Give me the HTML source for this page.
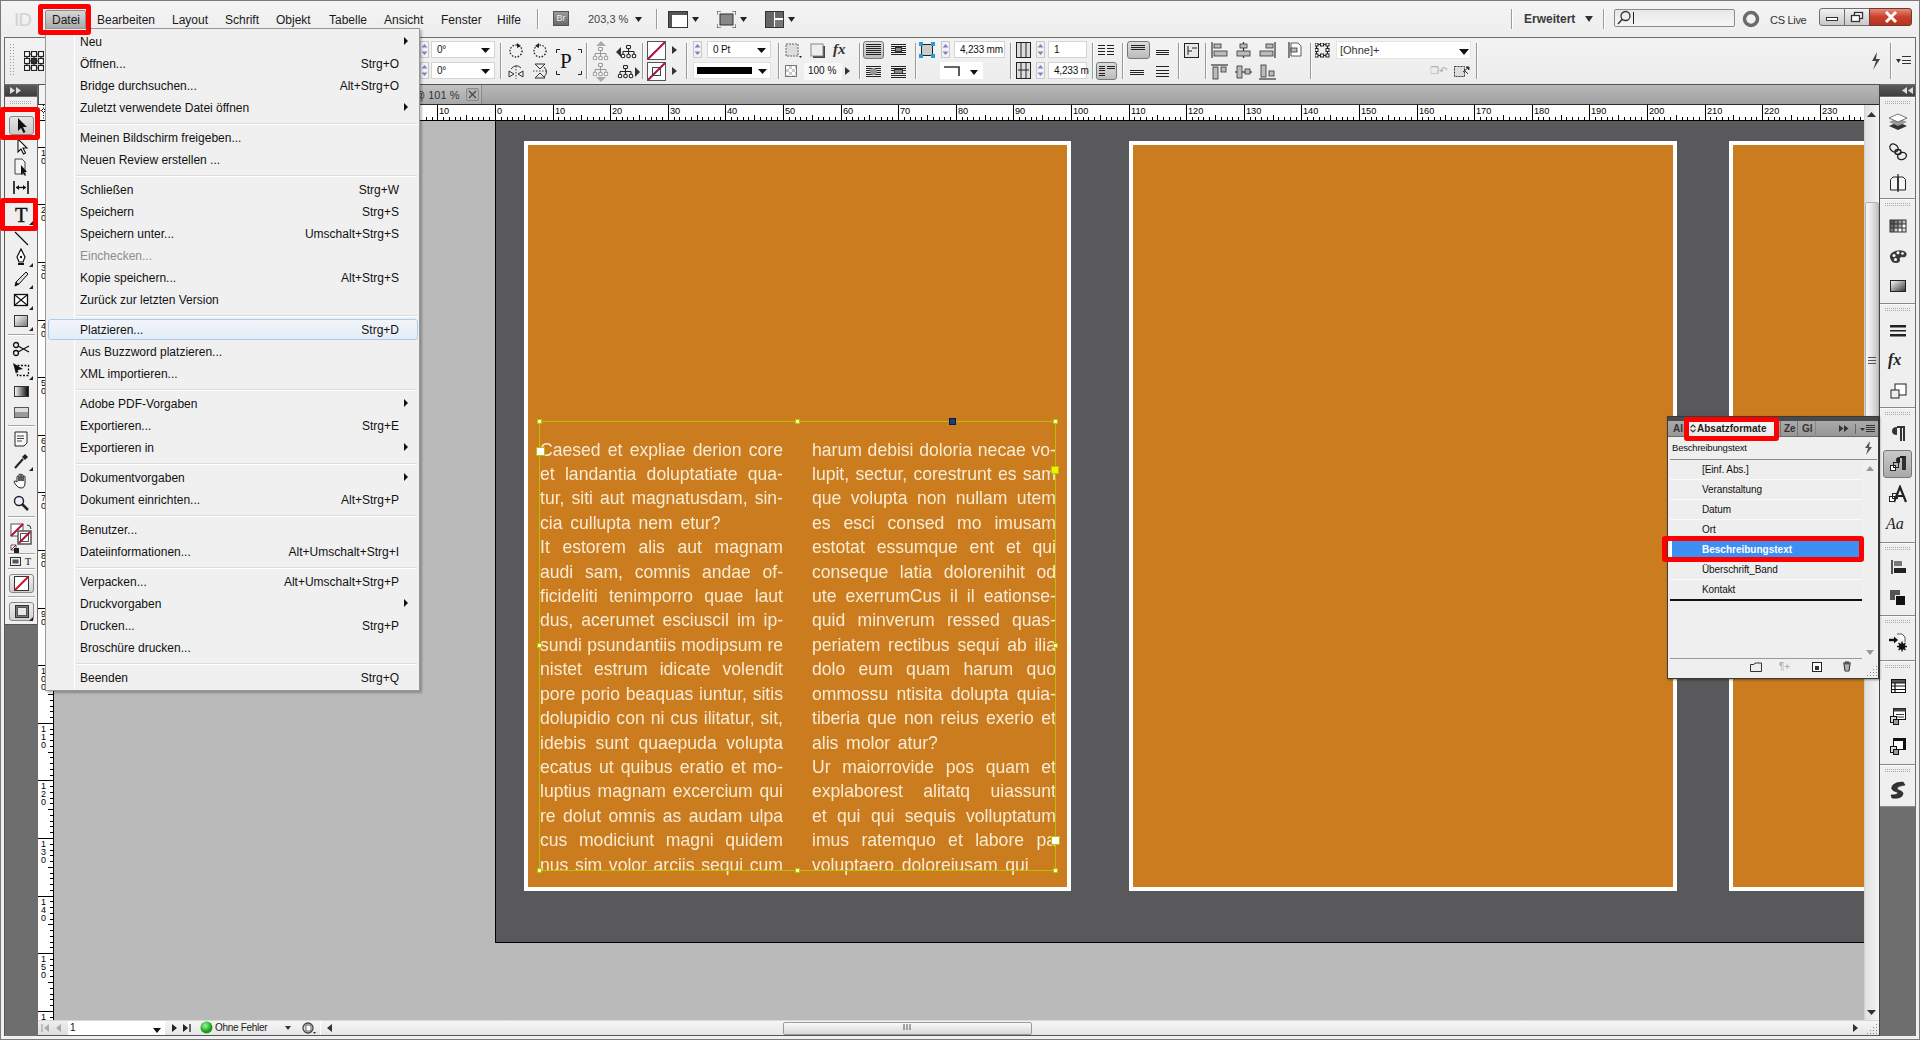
<!DOCTYPE html><html><head><meta charset="utf-8"><style>
*{margin:0;padding:0;box-sizing:border-box}
html,body{width:1920px;height:1040px;overflow:hidden;background:#f0f0f0;font-family:"Liberation Sans",sans-serif;}
body>div,div.a,.t,svg.a{position:absolute}
div div{position:absolute}
.t{white-space:nowrap;line-height:1}
</style></head><body>
<div style="left:0px;top:0px;width:1920px;height:1040px;border:1px solid #7a7a7a;background:#f0f0f0"></div>
<div style="left:1px;top:1px;width:1918px;height:36px;background:linear-gradient(#f4f4f4,#ededed)"></div>
<div style="left:45px;top:10px;width:41px;height:19px;background:linear-gradient(#d6d6d6,#a9a9a9);border:1px solid #8c8c8c;border-radius:2px"></div>
<div class="t" style="left:52px;top:14px;font-size:12px;color:#1a1a1a">Datei</div>
<div class="t" style="left:97px;top:14px;font-size:12px;color:#1a1a1a">Bearbeiten</div>
<div class="t" style="left:172px;top:14px;font-size:12px;color:#1a1a1a">Layout</div>
<div class="t" style="left:225px;top:14px;font-size:12px;color:#1a1a1a">Schrift</div>
<div class="t" style="left:276px;top:14px;font-size:12px;color:#1a1a1a">Objekt</div>
<div class="t" style="left:329px;top:14px;font-size:12px;color:#1a1a1a">Tabelle</div>
<div class="t" style="left:384px;top:14px;font-size:12px;color:#1a1a1a">Ansicht</div>
<div class="t" style="left:441px;top:14px;font-size:12px;color:#1a1a1a">Fenster</div>
<div class="t" style="left:497px;top:14px;font-size:12px;color:#1a1a1a">Hilfe</div>
<div class="t" style="left:14px;top:10px;font-size:19px;color:#d2d2d2;letter-spacing:-1px">ID</div>
<div style="left:537px;top:9px;width:2px;height:20px;background:#9c9c9c;border-right:1px solid #fff"></div>
<div style="left:656px;top:9px;width:2px;height:20px;background:#9c9c9c;border-right:1px solid #fff"></div>
<div style="left:1511px;top:9px;width:2px;height:20px;background:#9c9c9c;border-right:1px solid #fff"></div>
<div style="left:1603px;top:9px;width:2px;height:20px;background:#9c9c9c;border-right:1px solid #fff"></div>
<div style="left:553px;top:11px;width:16px;height:15px;background:linear-gradient(#9a9a9a,#6a6a6a);border:1px solid #555;font-size:9px;color:#eee;text-align:center;line-height:13px">Br</div>
<div class="t" style="left:588px;top:14px;font-size:11px;color:#444">203,3 %</div>
<svg class="a" style="left:635px;top:17px" width="7" height="5"><path d="M0 0H7L3.5 5Z" fill="#222"/></svg>
<svg class="a" style="left:668px;top:11px" width="20" height="17"><rect x="0.5" y="0.5" width="19" height="16" fill="#fff" stroke="#333"/><rect x="1" y="1" width="18" height="3" fill="#555"/><rect x="1" y="1" width="3" height="15" fill="#555"/></svg>
<svg class="a" style="left:692px;top:17px" width="7" height="5"><path d="M0 0H7L3.5 5Z" fill="#222"/></svg>
<svg class="a" style="left:717px;top:11px" width="19" height="17"><rect x="3" y="3" width="13" height="11" fill="#888" stroke="#333"/><path d="M0 4V0H4M15 0H19V4M19 13V17H15M4 17H0V13" stroke="#333" fill="none"/></svg>
<svg class="a" style="left:740px;top:17px" width="7" height="5"><path d="M0 0H7L3.5 5Z" fill="#222"/></svg>
<svg class="a" style="left:765px;top:11px" width="19" height="17"><rect x="0.5" y="0.5" width="18" height="16" fill="#fff" stroke="#333"/><rect x="1" y="1" width="8" height="15" fill="#666"/><rect x="10" y="1" width="8" height="6" fill="#666"/><rect x="10" y="9" width="8" height="7" fill="#777"/></svg>
<svg class="a" style="left:788px;top:17px" width="7" height="5"><path d="M0 0H7L3.5 5Z" fill="#222"/></svg>
<div class="t" style="left:1524px;top:13px;font-size:12px;color:#3a3a3a;font-weight:bold">Erweitert</div>
<svg class="a" style="left:1585px;top:16px" width="8" height="6"><path d="M0 0H8L4.0 6Z" fill="#333"/></svg>
<div style="left:1614px;top:9px;width:121px;height:18px;background:linear-gradient(#e8e8e8,#f6f6f6);border:1px solid #8a8a8a;border-radius:2px"></div>
<svg class="a" style="left:1617px;top:10px" width="14" height="15"><circle cx="8.5" cy="6" r="4.5" fill="none" stroke="#333" stroke-width="1.3"/><path d="M5.5 9L1 14" stroke="#333" stroke-width="1.5"/></svg>
<div style="left:1633px;top:12px;width:1px;height:12px;background:#222"></div>
<svg class="a" style="left:1742px;top:10px" width="18" height="18"><circle cx="9" cy="9" r="6.5" fill="none" stroke="#6a6a6a" stroke-width="3.5"/></svg>
<div class="t" style="left:1770px;top:15px;font-size:11px;color:#333;letter-spacing:-0.3px">CS Live</div>
<div style="left:1819px;top:8px;width:26px;height:18px;background:linear-gradient(#f2f2f2,#c9c9c9);border:1px solid #6d6d6d;border-radius:3px 0 0 3px"></div>
<div style="left:1826px;top:17px;width:12px;height:4px;border:1px solid #333;background:#fff"></div>
<div style="left:1844px;top:8px;width:26px;height:18px;background:linear-gradient(#f2f2f2,#c9c9c9);border:1px solid #6d6d6d"></div>
<svg class="a" style="left:1850px;top:11px" width="14" height="12"><rect x="4.5" y="1.5" width="8" height="6" fill="#fff" stroke="#333" stroke-width="1.3"/><rect x="1.5" y="4.5" width="8" height="6" fill="#fff" stroke="#333" stroke-width="1.3"/></svg>
<div style="left:1869px;top:8px;width:43px;height:18px;background:linear-gradient(#e88a7a,#c8402c 50%,#b8321f);border:1px solid #6d3a30;border-radius:0 3px 3px 0"></div>
<svg class="a" style="left:1883px;top:10px" width="16" height="14"><path d="M3 2L13 12M13 2L3 12" stroke="#fff" stroke-width="3"/></svg>
<div style="left:4px;top:37px;width:1912px;height:48px;border:1px solid #6e6e6e;background:#efefef"></div>
<div style="left:5px;top:38px;width:1910px;height:46px;background:linear-gradient(#f3f3f3,#ececec)"></div>
<svg class="a" style="left:9px;top:44px" width="6" height="34"><g fill="#999"><rect x="1" y="0" width="1" height="1"/><rect x="4" y="0" width="1" height="1"/><rect x="1" y="3" width="1" height="1"/><rect x="4" y="3" width="1" height="1"/><rect x="1" y="6" width="1" height="1"/><rect x="4" y="6" width="1" height="1"/><rect x="1" y="9" width="1" height="1"/><rect x="4" y="9" width="1" height="1"/><rect x="1" y="12" width="1" height="1"/><rect x="4" y="12" width="1" height="1"/><rect x="1" y="15" width="1" height="1"/><rect x="4" y="15" width="1" height="1"/><rect x="1" y="18" width="1" height="1"/><rect x="4" y="18" width="1" height="1"/><rect x="1" y="21" width="1" height="1"/><rect x="4" y="21" width="1" height="1"/><rect x="1" y="24" width="1" height="1"/><rect x="4" y="24" width="1" height="1"/><rect x="1" y="27" width="1" height="1"/><rect x="4" y="27" width="1" height="1"/><rect x="1" y="30" width="1" height="1"/><rect x="4" y="30" width="1" height="1"/></g></svg>
<svg class="a" style="left:24px;top:51px" width="20" height="20"><g fill="#fff" stroke="#222" stroke-width="1.2"><path d="M3 3H17M3 10H17M3 17H17M3 3V17M10 3V17M17 3V17" fill="none"/><rect x="0.5" y="0.5" width="5" height="5"/><rect x="0.5" y="7.5" width="5" height="5"/><rect x="0.5" y="14.5" width="5" height="5"/><rect x="7.5" y="0.5" width="5" height="5"/><rect x="7.5" y="14.5" width="5" height="5"/><rect x="14.5" y="0.5" width="5" height="5"/><rect x="14.5" y="7.5" width="5" height="5"/><rect x="14.5" y="14.5" width="5" height="5"/><rect x="7.5" y="7.5" width="5" height="5" fill="#333"/></g></svg>
<div style="left:420px;top:41px;width:9px;height:17px;border:1px solid #c8c8c8;background:#f2f2f2"></div><svg class="a" style="left:421px;top:43px" width="7" height="13"><path d="M0.5 4.5L3.5 1L6.5 4.5Z M0.5 8.5L3.5 12L6.5 8.5Z" fill="#7c83c6"/></svg>
<div style="left:420px;top:62px;width:9px;height:17px;border:1px solid #c8c8c8;background:#f2f2f2"></div><svg class="a" style="left:421px;top:64px" width="7" height="13"><path d="M0.5 4.5L3.5 1L6.5 4.5Z M0.5 8.5L3.5 12L6.5 8.5Z" fill="#7c83c6"/></svg>
<div style="left:431px;top:41px;width:64px;height:17px;background:#fff;border:1px solid #d4d4d4"></div><div class="t" style="left:437px;top:45px;font-size:10px;color:#111;letter-spacing:-0.2px">0°</div><svg class="a" style="left:481px;top:48px" width="9" height="5"><path d="M0 0H9L4.5 5Z" fill="#111"/></svg>
<div style="left:431px;top:62px;width:64px;height:17px;background:#fff;border:1px solid #d4d4d4"></div><div class="t" style="left:437px;top:66px;font-size:10px;color:#111;letter-spacing:-0.2px">0°</div><svg class="a" style="left:481px;top:69px" width="9" height="5"><path d="M0 0H9L4.5 5Z" fill="#111"/></svg>
<div style="left:500px;top:43px;width:2px;height:36px;background:#9a9a9a;border-right:1px solid #fafafa"></div>
<div style="left:586px;top:43px;width:2px;height:36px;background:#9a9a9a;border-right:1px solid #fafafa"></div>
<div style="left:642px;top:43px;width:2px;height:36px;background:#9a9a9a;border-right:1px solid #fafafa"></div>
<div style="left:686px;top:43px;width:2px;height:36px;background:#9a9a9a;border-right:1px solid #fafafa"></div>
<div style="left:778px;top:43px;width:2px;height:36px;background:#9a9a9a;border-right:1px solid #fafafa"></div>
<div style="left:859px;top:43px;width:2px;height:36px;background:#9a9a9a;border-right:1px solid #fafafa"></div>
<div style="left:915px;top:43px;width:2px;height:36px;background:#9a9a9a;border-right:1px solid #fafafa"></div>
<div style="left:1010px;top:43px;width:2px;height:36px;background:#9a9a9a;border-right:1px solid #fafafa"></div>
<div style="left:1092px;top:43px;width:2px;height:36px;background:#9a9a9a;border-right:1px solid #fafafa"></div>
<div style="left:1122px;top:43px;width:2px;height:36px;background:#9a9a9a;border-right:1px solid #fafafa"></div>
<div style="left:1178px;top:43px;width:2px;height:36px;background:#9a9a9a;border-right:1px solid #fafafa"></div>
<div style="left:1205px;top:43px;width:2px;height:36px;background:#9a9a9a;border-right:1px solid #fafafa"></div>
<div style="left:1310px;top:43px;width:2px;height:36px;background:#9a9a9a;border-right:1px solid #fafafa"></div>
<div style="left:1476px;top:43px;width:2px;height:36px;background:#9a9a9a;border-right:1px solid #fafafa"></div>
<div style="left:1890px;top:43px;width:2px;height:36px;background:#9a9a9a;border-right:1px solid #fafafa"></div>
<svg class="a" style="left:508px;top:42px" width="16" height="16"><circle cx="8" cy="9" r="6" fill="none" stroke="#222" stroke-dasharray="1.5 1.5" stroke-width="1.3"/><path d="M9 1L13 4L9 6Z" fill="#222"/></svg>
<svg class="a" style="left:532px;top:42px" width="16" height="16"><circle cx="8" cy="9" r="6" fill="none" stroke="#222" stroke-dasharray="1.5 1.5" stroke-width="1.3"/><path d="M7 1L3 4L7 6Z" fill="#222"/></svg>
<svg class="a" style="left:508px;top:63px" width="16" height="16"><path d="M8 3V16" stroke="#444" stroke-dasharray="1.5 1.5"/><path d="M1 8L6 11L1 14Z M15 8L10 11L15 14Z" fill="none" stroke="#333"/><path d="M3 6Q8 0 13 5" fill="none" stroke="#333"/></svg>
<svg class="a" style="left:532px;top:63px" width="16" height="16"><path d="M1 8H15" stroke="#444" stroke-dasharray="1.5 1.5"/><path d="M3 1L8 6L13 1Z M3 15L8 10L13 15Z" fill="none" stroke="#333"/><path d="M12 4Q17 9 12 14" fill="none" stroke="#333"/></svg>
<svg class="a" style="left:556px;top:49px" width="26" height="26"><path d="M0.5 4V0.5H4M22 0.5H25.5V4M25.5 22V25.5H22M4 25.5H0.5V22" stroke="#222" fill="none"/></svg>
<div class="t" style="left:560px;top:51px;font-family:'Liberation Serif',serif;font-size:21px;color:#111">P</div>
<svg class="a" style="left:592px;top:47px" width="18" height="14"><g fill="#fff" stroke="#999" stroke-width="1.1"><rect x="6.5" y="0.5" width="4" height="3" rx="1"/><path d="M8.5 4V6.5M3 6.5H14M3 6.5V9M8.5 6.5V9M14 6.5V9" fill="none"/><circle cx="3" cy="11" r="1.8"/><circle cx="8.5" cy="11" r="1.8"/><circle cx="14" cy="11" r="1.8"/></g></svg>
<svg class="a" style="left:620px;top:45px" width="18" height="14"><g fill="#fff" stroke="#222" stroke-width="1.1"><rect x="6.5" y="0.5" width="4" height="3" rx="1"/><path d="M8.5 4V6.5M3 6.5H14M3 6.5V9M8.5 6.5V9M14 6.5V9" fill="none"/><circle cx="3" cy="11" r="1.8"/><circle cx="8.5" cy="11" r="1.8"/><circle cx="14" cy="11" r="1.8"/></g></svg>
<svg class="a" style="left:592px;top:63px" width="18" height="14"><g fill="#fff" stroke="#999" stroke-width="1.1"><rect x="6.5" y="0.5" width="4" height="3" rx="1"/><path d="M8.5 4V6.5M3 6.5H14M3 6.5V9M8.5 6.5V9M14 6.5V9" fill="none"/><circle cx="3" cy="11" r="1.8"/><circle cx="8.5" cy="11" r="1.8"/><circle cx="14" cy="11" r="1.8"/></g></svg>
<svg class="a" style="left:617px;top:65px" width="18" height="14"><g fill="#fff" stroke="#222" stroke-width="1.1"><rect x="6.5" y="0.5" width="4" height="3" rx="1"/><path d="M8.5 4V6.5M3 6.5H14M3 6.5V9M8.5 6.5V9M14 6.5V9" fill="none"/><circle cx="3" cy="11" r="1.8"/><circle cx="8.5" cy="11" r="1.8"/><circle cx="14" cy="11" r="1.8"/></g></svg>
<svg class="a" style="left:596px;top:41px" width="10" height="5"><path d="M0 5L5 0L10 5Z" fill="#aaa"/></svg>
<svg class="a" style="left:596px;top:77px" width="10" height="5"><path d="M0 0L5 5L10 0Z" fill="#aaa"/></svg>
<svg class="a" style="left:616px;top:47px" width="5" height="10"><path d="M5 0L0 5L5 10Z" fill="#333"/></svg>
<svg class="a" style="left:635px;top:67px" width="5" height="10"><path d="M0 0L5 5L0 10Z" fill="#333"/></svg>
<div style="left:647px;top:41px;width:19px;height:19px;border:1px solid #555;background:#fff"></div>
<svg class="a" style="left:648px;top:42px" width="17" height="17"><path d="M0 17L17 0" stroke="#b0103a" stroke-width="2"/></svg>
<svg class="a" style="left:672px;top:46px" width="5" height="8"><path d="M0 0L5 4L0 8Z" fill="#333"/></svg>
<div style="left:647px;top:62px;width:19px;height:19px;border:1px solid #555;background:#fff"></div>
<svg class="a" style="left:648px;top:63px" width="17" height="17"><path d="M0 17L17 0" stroke="#b0103a" stroke-width="2"/></svg>
<svg class="a" style="left:672px;top:67px" width="5" height="8"><path d="M0 0L5 4L0 8Z" fill="#333"/></svg>
<div style="left:652px;top:67px;width:9px;height:9px;border:1px solid #444"></div>
<div style="left:693px;top:41px;width:9px;height:17px;border:1px solid #c8c8c8;background:#f2f2f2"></div><svg class="a" style="left:694px;top:43px" width="7" height="13"><path d="M0.5 4.5L3.5 1L6.5 4.5Z M0.5 8.5L3.5 12L6.5 8.5Z" fill="#7c83c6"/></svg>
<div style="left:707px;top:41px;width:64px;height:17px;background:#fff;border:1px solid #d4d4d4"></div><div class="t" style="left:713px;top:45px;font-size:10px;color:#111;letter-spacing:-0.2px">0 Pt</div><svg class="a" style="left:757px;top:48px" width="9" height="5"><path d="M0 0H9L4.5 5Z" fill="#111"/></svg>
<div style="left:693px;top:62px;width:78px;height:17px;background:#fff;border:1px solid #e0e0e0"></div>
<div style="left:697px;top:67px;width:55px;height:7px;background:#000"></div>
<svg class="a" style="left:758px;top:69px" width="9" height="5"><path d="M0 0H9L4.5 5Z" fill="#111"/></svg>
<svg class="a" style="left:785px;top:43px" width="18" height="16"><rect x="1" y="1" width="12" height="12" fill="#ddd" stroke="#666" stroke-dasharray="2 1"/><path d="M14 13L17 13L15.5 15Z" fill="#222"/></svg>
<svg class="a" style="left:810px;top:43px" width="16" height="16"><rect x="3" y="3" width="12" height="12" fill="#444"/><rect x="1" y="1" width="12" height="12" fill="#eee" stroke="#888"/></svg>
<div class="t" style="left:833px;top:42px;font-family:'Liberation Serif',serif;font-style:italic;font-weight:bold;font-size:15px;color:#333">fx</div>
<div style="left:785px;top:65px;width:12px;height:12px;border:1px solid #777;background:repeating-conic-gradient(#ccc 0 25%,#fff 0 50%) 0 0/6px 6px"></div>
<div style="left:804px;top:63px;width:38px;height:17px;background:#f8f8f8"></div>
<div class="t" style="left:808px;top:66px;font-size:10px;color:#111">100 %</div>
<svg class="a" style="left:845px;top:67px" width="5" height="8"><path d="M0 0L5 4L0 8Z" fill="#333"/></svg>
<div style="left:863px;top:41px;width:21px;height:18px;border:1px solid #777;border-radius:3px;background:linear-gradient(#ddd,#bbb)"></div>
<svg class="a" style="left:866px;top:44px" width="15" height="14"><rect x="0" y="0" width="15" height="1" fill="#222"/><rect x="0" y="2" width="15" height="1" fill="#222"/><rect x="0" y="4" width="15" height="1" fill="#222"/><rect x="0" y="6" width="15" height="1" fill="#222"/><rect x="0" y="8" width="15" height="1" fill="#222"/><rect x="0" y="10" width="15" height="1" fill="#222"/></svg>
<svg class="a" style="left:891px;top:44px" width="15" height="14"><rect x="0" y="0" width="15" height="1" fill="#222"/><rect x="0" y="2" width="15" height="1" fill="#222"/><rect x="0" y="4" width="15" height="1" fill="#222"/><rect x="0" y="6" width="15" height="1" fill="#222"/><rect x="0" y="8" width="15" height="1" fill="#222"/><rect x="0" y="10" width="15" height="1" fill="#222"/></svg>
<div style="left:895px;top:47px;width:7px;height:5px;background:#888;border:1px solid #333"></div>
<svg class="a" style="left:866px;top:66px" width="15" height="14"><rect x="0" y="0" width="15" height="1" fill="#222"/><rect x="0" y="2" width="15" height="1" fill="#222"/><rect x="0" y="4" width="15" height="1" fill="#222"/><rect x="0" y="6" width="15" height="1" fill="#222"/><rect x="0" y="8" width="15" height="1" fill="#222"/><rect x="0" y="10" width="15" height="1" fill="#222"/></svg>
<div style="left:870px;top:68px;width:7px;height:7px;background:#999;border-radius:50%"></div>
<svg class="a" style="left:891px;top:66px" width="15" height="15"><rect x="0" y="0" width="15" height="1" fill="#222"/><rect x="0" y="2" width="15" height="1" fill="#222"/><rect x="0" y="4" width="15" height="1" fill="#222"/><rect x="0" y="7" width="15" height="1" fill="#222"/><rect x="0" y="9" width="15" height="1" fill="#222"/><rect x="0" y="11" width="15" height="1" fill="#222"/></svg>
<div style="left:894px;top:69px;width:9px;height:5px;background:#888;border:1px solid #333"></div>
<svg class="a" style="left:919px;top:42px" width="16" height="16"><rect x="2.5" y="2.5" width="11" height="11" fill="#ccc" stroke="#222"/><g fill="#2a9ad8"><rect x="0" y="0" width="4" height="4"/><rect x="12" y="0" width="4" height="4"/><rect x="0" y="12" width="4" height="4"/><rect x="12" y="12" width="4" height="4"/></g></svg>
<div style="left:941px;top:41px;width:9px;height:17px;border:1px solid #c8c8c8;background:#f2f2f2"></div><svg class="a" style="left:942px;top:43px" width="7" height="13"><path d="M0.5 4.5L3.5 1L6.5 4.5Z M0.5 8.5L3.5 12L6.5 8.5Z" fill="#7c83c6"/></svg>
<div style="left:954px;top:41px;width:51px;height:17px;background:#fff;border:1px solid #d4d4d4"></div><div class="t" style="left:960px;top:45px;font-size:10px;color:#111;letter-spacing:-0.2px">4,233 mm</div>
<div style="left:940px;top:62px;width:43px;height:17px;background:#fff"></div>
<svg class="a" style="left:944px;top:66px" width="16" height="10"><path d="M0 1H15V10" stroke="#333" stroke-width="1.6" fill="none"/></svg>
<svg class="a" style="left:970px;top:70px" width="8" height="5"><path d="M0 0H8L4.0 5Z" fill="#111"/></svg>
<svg class="a" style="left:1016px;top:42px" width="15" height="16"><rect x="0.5" y="0.5" width="14" height="15" fill="#ddd" stroke="#222"/><path d="M5 0V16M10 0V16" stroke="#222"/></svg>
<svg class="a" style="left:1016px;top:62px" width="15" height="17"><rect x="0.5" y="0.5" width="14" height="16" fill="#ddd" stroke="#222"/><path d="M5 0V17M10 0V17M2 8H13" stroke="#222"/></svg>
<div style="left:1036px;top:41px;width:9px;height:17px;border:1px solid #c8c8c8;background:#f2f2f2"></div><svg class="a" style="left:1037px;top:43px" width="7" height="13"><path d="M0.5 4.5L3.5 1L6.5 4.5Z M0.5 8.5L3.5 12L6.5 8.5Z" fill="#7c83c6"/></svg>
<div style="left:1036px;top:62px;width:9px;height:17px;border:1px solid #c8c8c8;background:#f2f2f2"></div><svg class="a" style="left:1037px;top:64px" width="7" height="13"><path d="M0.5 4.5L3.5 1L6.5 4.5Z M0.5 8.5L3.5 12L6.5 8.5Z" fill="#7c83c6"/></svg>
<div style="left:1048px;top:41px;width:39px;height:17px;background:#fff;border:1px solid #d4d4d4"></div><div class="t" style="left:1054px;top:45px;font-size:10px;color:#111;letter-spacing:-0.2px">1</div>
<div style="left:1048px;top:62px;width:39px;height:17px;background:#fff;border:1px solid #d4d4d4"></div><div class="t" style="left:1054px;top:66px;font-size:10px;color:#111;letter-spacing:-0.2px">4,233 m</div>
<svg class="a" style="left:1098px;top:45px" width="7" height="14"><rect x="0" y="0" width="7" height="1" fill="#222"/><rect x="0" y="3" width="7" height="1" fill="#222"/><rect x="0" y="6" width="7" height="1" fill="#222"/><rect x="0" y="9" width="7" height="1" fill="#222"/></svg>
<svg class="a" style="left:1107px;top:45px" width="7" height="14"><rect x="0" y="0" width="7" height="1" fill="#222"/><rect x="0" y="3" width="7" height="1" fill="#222"/><rect x="0" y="6" width="7" height="1" fill="#222"/><rect x="0" y="9" width="7" height="1" fill="#222"/></svg>
<div style="left:1096px;top:62px;width:21px;height:18px;border:1px solid #777;border-radius:3px;background:linear-gradient(#ddd,#bbb)"></div>
<svg class="a" style="left:1099px;top:66px" width="6" height="13"><rect x="0" y="0" width="6" height="1" fill="#222"/><rect x="0" y="2" width="6" height="1" fill="#222"/><rect x="0" y="4" width="6" height="1" fill="#222"/><rect x="0" y="7" width="6" height="1" fill="#222"/><rect x="0" y="9" width="6" height="1" fill="#222"/></svg>
<svg class="a" style="left:1107px;top:66px" width="8" height="7"><rect x="0" y="0" width="8" height="1" fill="#222"/><rect x="0" y="2" width="8" height="1" fill="#222"/></svg>
<div style="left:1127px;top:41px;width:23px;height:18px;border:1px solid #777;border-radius:3px;background:linear-gradient(#ddd,#bbb)"></div>
<svg class="a" style="left:1131px;top:45px" width="14" height="8"><rect x="0" y="0" width="14" height="1" fill="#222"/><rect x="0" y="2" width="14" height="1" fill="#222"/><rect x="0" y="4" width="14" height="1" fill="#222"/></svg>
<svg class="a" style="left:1156px;top:50px" width="13" height="8"><rect x="0" y="0" width="13" height="1" fill="#222"/><rect x="0" y="2" width="13" height="1" fill="#222"/><rect x="0" y="4" width="13" height="1" fill="#222"/></svg>
<svg class="a" style="left:1130px;top:70px" width="14" height="8"><rect x="0" y="0" width="14" height="1" fill="#222"/><rect x="0" y="2" width="14" height="1" fill="#222"/><rect x="0" y="4" width="14" height="1" fill="#222"/></svg>
<svg class="a" style="left:1156px;top:66px" width="13" height="16"><rect x="0" y="0" width="13" height="1" fill="#222"/><rect x="0" y="4" width="13" height="1" fill="#222"/><rect x="0" y="7" width="13" height="1" fill="#222"/><rect x="0" y="10" width="13" height="1" fill="#222"/></svg>
<svg class="a" style="left:1183px;top:42px" width="17" height="17"><rect x="1.5" y="1.5" width="14" height="14" fill="#e8e8e8" stroke="#222"/><path d="M5 4V13M9 6H14M5 9H9" stroke="#222"/></svg>
<svg class="a" style="left:1211px;top:42px" width="17" height="16"><g fill="#bbb" stroke="#333" stroke-width="0.8"><path d="M1 0V16" stroke-width="1.2"/><rect x="3" y="2" width="7" height="4"/><rect x="3" y="9" width="13" height="5"/></g></svg>
<svg class="a" style="left:1235px;top:42px" width="17" height="16"><g fill="#bbb" stroke="#333" stroke-width="0.8"><path d="M8.5 0V16" stroke-width="1.2"/><rect x="5" y="2" width="7" height="4"/><rect x="2" y="9" width="13" height="5"/></g></svg>
<svg class="a" style="left:1259px;top:42px" width="17" height="16"><g fill="#bbb" stroke="#333" stroke-width="0.8"><path d="M16 0V16" stroke-width="1.2"/><rect x="7" y="2" width="7" height="4"/><rect x="1" y="9" width="13" height="5"/></g></svg>
<svg class="a" style="left:1288px;top:42px" width="17" height="16"><g fill="#bbb" stroke="#333" stroke-width="0.8"><path d="M1 0V16" stroke-width="1.2"/><path d="M3 1H10L13 4V14H3Z" fill="#fff"/><rect x="3" y="6" width="6" height="4"/></g></svg>
<svg class="a" style="left:1211px;top:64px" width="17" height="16"><g fill="#bbb" stroke="#333" stroke-width="0.8"><path d="M0 1H17" stroke-width="1.2"/><rect x="2" y="3" width="5" height="12"/><rect x="10" y="3" width="5" height="5"/></g></svg>
<svg class="a" style="left:1235px;top:64px" width="17" height="16"><g fill="#bbb" stroke="#333" stroke-width="0.8"><path d="M0 8H17" stroke-width="1.2"/><rect x="2" y="2" width="5" height="12"/><rect x="10" y="5" width="5" height="5"/></g></svg>
<svg class="a" style="left:1259px;top:64px" width="17" height="16"><g fill="#bbb" stroke="#333" stroke-width="0.8"><path d="M0 15H17" stroke-width="1.2"/><rect x="2" y="1" width="5" height="12"/><rect x="10" y="7" width="5" height="5"/></g></svg>
<svg class="a" style="left:1315px;top:43px" width="17" height="16"><rect x="1.5" y="1.5" width="11" height="11" fill="none" stroke="#222" stroke-width="1.2"/><g fill="#fff" stroke="#222"><rect x="0" y="0" width="3" height="3"/><rect x="0" y="5.5" width="3" height="3"/><rect x="0" y="11" width="3" height="3"/><rect x="5.5" y="0" width="3" height="3"/><rect x="5.5" y="11" width="3" height="3"/><rect x="11" y="0" width="3" height="3"/><rect x="11" y="5.5" width="3" height="3"/><rect x="11" y="11" width="3" height="3"/></g></svg>
<div style="left:1336px;top:41px;width:135px;height:18px;background:#fff;border:1px solid #e4e4e4"></div>
<div class="t" style="left:1340px;top:45px;font-size:11px;color:#333">[Ohne]+</div>
<svg class="a" style="left:1459px;top:49px" width="10" height="6"><path d="M0 0H10L5.0 6Z" fill="#111"/></svg>
<div class="t" style="left:1430px;top:66px;font-size:10px;color:#aaa">&#x2750;&#x21B6;</div>
<svg class="a" style="left:1454px;top:66px" width="16" height="12"><rect x="0.5" y="0.5" width="10" height="10" fill="#ddd" stroke="#333" stroke-dasharray="2 1"/><path d="M9 6L15 1M12 1H15V4M10 4L14 8" stroke="#333"/></svg>
<svg class="a" style="left:1870px;top:52px" width="12" height="18"><path d="M7 0L2 9H6L3 18L10 7H6Z" fill="#444"/></svg>
<svg class="a" style="left:1896px;top:59px" width="5" height="4"><path d="M0 0H5L2.5 4Z" fill="#333"/></svg>
<svg class="a" style="left:1902px;top:56px" width="9" height="12"><rect x="0" y="0" width="9" height="1" fill="#333"/><rect x="0" y="4" width="9" height="1" fill="#333"/><rect x="0" y="7" width="9" height="1" fill="#333"/></svg>
<div style="left:4px;top:85px;width:34px;height:951px;background:#6e6e6e;border-left:1px solid #585858"></div>
<div style="left:5px;top:85px;width:32px;height:11px;background:linear-gradient(#5c5c5c,#3e3e3e)"></div>
<svg class="a" style="left:10px;top:87px" width="12" height="7"><path d="M0 0L5 3.5L0 7Z M6 0L11 3.5L6 7Z" fill="#ddd"/></svg>
<div style="left:5px;top:97px;width:32px;height:528px;background:#efefef;border-bottom:1px solid #555"></div>
<svg class="a" style="left:10px;top:101px" width="22" height="3"><g fill="#aaa"><rect x="0" y="0" width="1" height="1"/><rect x="0" y="2" width="1" height="1"/><rect x="2" y="0" width="1" height="1"/><rect x="2" y="2" width="1" height="1"/><rect x="4" y="0" width="1" height="1"/><rect x="4" y="2" width="1" height="1"/><rect x="6" y="0" width="1" height="1"/><rect x="6" y="2" width="1" height="1"/><rect x="8" y="0" width="1" height="1"/><rect x="8" y="2" width="1" height="1"/><rect x="10" y="0" width="1" height="1"/><rect x="10" y="2" width="1" height="1"/><rect x="12" y="0" width="1" height="1"/><rect x="12" y="2" width="1" height="1"/><rect x="14" y="0" width="1" height="1"/><rect x="14" y="2" width="1" height="1"/><rect x="16" y="0" width="1" height="1"/><rect x="16" y="2" width="1" height="1"/><rect x="18" y="0" width="1" height="1"/><rect x="18" y="2" width="1" height="1"/><rect x="20" y="0" width="1" height="1"/><rect x="20" y="2" width="1" height="1"/></g></svg>
<div style="left:9px;top:116px;width:25px;height:19px;border:1px solid #888;border-radius:3px;background:linear-gradient(#e6e6e6,#c8c8c8)"></div>
<svg class="a" style="left:12px;top:116px" width="18" height="18"><path d="M6 2L6 15L9 12L11.5 17L13.5 16L11 11L15 11Z" fill="#111"/></svg>
<svg class="a" style="left:12px;top:137px" width="18" height="18"><path d="M6 2L6 15L9 12L11.5 17L13.5 16L11 11L15 11Z" fill="#fff" stroke="#111" stroke-width="1.1"/></svg>
<svg class="a" style="left:12px;top:158px" width="18" height="18"><path d="M3 1H10L13 4V16H3Z" fill="#f4f4f4" stroke="#444"/><path d="M9 7L9 17L11 15L13 18L14 17L12 14L15 14Z" fill="#111"/></svg>
<svg class="a" style="left:12px;top:178px" width="18" height="18"><path d="M2 3V16M16 3V16" stroke="#111" stroke-width="1.6"/><path d="M4 9.5H14" stroke="#111" stroke-width="1.3"/><path d="M4 9.5L7 7V12Z M14 9.5L11 7V12Z" fill="#111"/></svg>
<div class="t" style="left:15px;top:205px;font-family:'Liberation Serif',serif;font-size:20.5px;color:#111;-webkit-text-stroke:0.4px #111">T</div>
<svg class="a" style="left:12px;top:229px" width="18" height="18"><path d="M3 3L16 16" stroke="#111" stroke-width="1.3"/></svg>
<svg class="a" style="left:12px;top:248px" width="18" height="18"><path d="M9 1L13 9L11 14H7L5 9Z" fill="#fff" stroke="#111" stroke-width="1.2"/><circle cx="9" cy="9" r="1.2" fill="#111"/><path d="M6 15H12V17H6Z" fill="#111"/></svg>
<svg class="a" style="left:12px;top:270px" width="18" height="18"><path d="M14 2L16 4L7 14L3 16L4 12Z" fill="#ddd" stroke="#111"/><path d="M3 16L4 12L7 14Z" fill="#111"/></svg>
<svg class="a" style="left:12px;top:291px" width="18" height="18"><rect x="2.5" y="3.5" width="13" height="11" fill="#fff" stroke="#111" stroke-width="1.3"/><path d="M3 4L15 14M15 4L3 14" stroke="#111" stroke-width="1.1"/></svg>
<svg class="a" style="left:12px;top:312px" width="18" height="18"><rect x="2.5" y="3.5" width="13" height="11" fill="url(#g1)" stroke="#333"/><defs><linearGradient id="g1" x1="0" y1="0" x2="1" y2="1"><stop offset="0" stop-color="#fff"/><stop offset="1" stop-color="#777"/></linearGradient></defs></svg>
<div style="left:8px;top:334px;width:27px;height:2px;background:#a8a8a8;border-bottom:1px solid #fff"></div>
<svg class="a" style="left:12px;top:340px" width="18" height="18"><circle cx="4" cy="5" r="2.5" fill="none" stroke="#111" stroke-width="1.3"/><circle cx="4" cy="13" r="2.5" fill="none" stroke="#111" stroke-width="1.3"/><path d="M6 6L17 12M6 12L17 6" stroke="#111" stroke-width="1.3"/></svg>
<svg class="a" style="left:12px;top:361px" width="18" height="18"><rect x="5.5" y="4.5" width="11" height="10" fill="none" stroke="#111" stroke-width="1.3" stroke-dasharray="2 1.5"/><path d="M1 2L11 8L6 9L4 13Z" fill="#111"/></svg>
<svg class="a" style="left:12px;top:382px" width="18" height="18"><defs><linearGradient id="g2"><stop offset="0" stop-color="#fff"/><stop offset="1" stop-color="#000"/></linearGradient></defs><rect x="2.5" y="4.5" width="14" height="10" fill="url(#g2)" stroke="#333"/></svg>
<svg class="a" style="left:12px;top:403px" width="18" height="18"><rect x="2.5" y="4.5" width="14" height="10" fill="#999" stroke="#555"/><rect x="3" y="5" width="13" height="4" fill="#ddd"/></svg>
<div style="left:8px;top:425px;width:27px;height:2px;background:#a8a8a8;border-bottom:1px solid #fff"></div>
<svg class="a" style="left:12px;top:430px" width="18" height="18"><path d="M3 2H15V13L12 16H3Z" fill="#f8f8f8" stroke="#222"/><path d="M5 6H12M5 8.5H12M5 11H10" stroke="#444"/></svg>
<svg class="a" style="left:12px;top:452px" width="18" height="18"><path d="M3 16L11 7" stroke="#222" stroke-width="2"/><path d="M10 5L13 2L16 5L13 8Z" fill="#222"/></svg>
<svg class="a" style="left:12px;top:472px" width="18" height="18"><path d="M5 10V5Q5 4 6 4Q7 4 7 5V9V3Q7 2 8 2Q9 2 9 3V9V3.5Q9 2.5 10 2.5Q11 2.5 11 3.5V9V5Q11 4 12 4Q13 4 13 5V11Q13 16 9 16Q6 16 4 13L2 10Q2 9 3 9Q4 9 5 10Z" fill="#fff" stroke="#222"/></svg>
<svg class="a" style="left:12px;top:494px" width="18" height="18"><circle cx="7" cy="7" r="4.5" fill="#eef" stroke="#222" stroke-width="1.4"/><path d="M10 10L16 16" stroke="#222" stroke-width="2.5"/></svg>
<div style="left:8px;top:516px;width:27px;height:2px;background:#a8a8a8;border-bottom:1px solid #fff"></div>
<svg class="a" style="left:10px;top:523px" width="24" height="31"><rect x="1" y="1" width="12" height="12" fill="#fff" stroke="#555"/><path d="M1 13L13 1" stroke="#b0103a" stroke-width="2"/><rect x="8" y="8" width="13" height="13" fill="#fff" stroke="#555" stroke-width="1.5"/><rect x="10.5" y="10.5" width="8" height="8" fill="none" stroke="#555"/><path d="M9 20L20 9" stroke="#b0103a" stroke-width="2"/><path d="M17 2Q21 2 21 6" fill="none" stroke="#333"/><path d="M1 22H6V27H1Z" fill="#fff" stroke="#555"/><path d="M1 27L6 22" stroke="#b0103a"/><rect x="4" y="25" width="5" height="5" fill="#222"/></svg>
<div style="left:8px;top:553px;width:27px;height:2px;background:#a8a8a8;border-bottom:1px solid #fff"></div>
<svg class="a" style="left:10px;top:557px" width="24" height="9"><rect x="0.5" y="0.5" width="10" height="8" fill="#eee" stroke="#333"/><rect x="2.5" y="2.5" width="6" height="4" fill="#555"/></svg>
<div class="t" style="left:25px;top:557px;font-family:'Liberation Serif',serif;font-size:10px;color:#111">T</div>
<div style="left:8px;top:568px;width:27px;height:2px;background:#a8a8a8;border-bottom:1px solid #fff"></div>
<div style="left:9px;top:574px;width:25px;height:19px;border:1px solid #888;border-radius:3px;background:linear-gradient(#eee,#d0d0d0)"></div>
<svg class="a" style="left:14px;top:576px" width="15" height="15"><rect x="0.5" y="0.5" width="14" height="14" fill="#fff" stroke="#333"/><path d="M1 14L14 1" stroke="#d01030" stroke-width="2"/></svg>
<div style="left:8px;top:596px;width:27px;height:2px;background:#a8a8a8;border-bottom:1px solid #fff"></div>
<div style="left:9px;top:602px;width:25px;height:19px;border:1px solid #888;border-radius:3px;background:linear-gradient(#eee,#d0d0d0)"></div>
<svg class="a" style="left:15px;top:605px" width="14" height="13"><rect x="0.5" y="0.5" width="13" height="12" fill="#777" stroke="#333"/><rect x="2.5" y="2.5" width="9" height="8" fill="#e8e8e8" stroke="#555"/></svg>
<svg class="a" style="left:29px;top:221px" width="4" height="4"><path d="M4 0V4H0Z" fill="#222"/></svg>
<svg class="a" style="left:29px;top:263px" width="4" height="4"><path d="M4 0V4H0Z" fill="#222"/></svg>
<svg class="a" style="left:29px;top:285px" width="4" height="4"><path d="M4 0V4H0Z" fill="#222"/></svg>
<svg class="a" style="left:29px;top:306px" width="4" height="4"><path d="M4 0V4H0Z" fill="#222"/></svg>
<svg class="a" style="left:29px;top:327px" width="4" height="4"><path d="M4 0V4H0Z" fill="#222"/></svg>
<svg class="a" style="left:29px;top:376px" width="4" height="4"><path d="M4 0V4H0Z" fill="#222"/></svg>
<svg class="a" style="left:29px;top:467px" width="4" height="4"><path d="M4 0V4H0Z" fill="#222"/></svg>
<svg class="a" style="left:29px;top:617px" width="4" height="4"><path d="M4 0V4H0Z" fill="#222"/></svg>
<div style="left:38px;top:84px;width:1842px;height:21px;background:linear-gradient(#b8b8b8,#a0a0a0);border-top:1px solid #555;border-bottom:1px solid #2a2a2a"></div>
<div style="left:38px;top:85px;width:444px;height:19px;background:linear-gradient(#c2c2c2,#a8a8a8);border-right:1px solid #8a8a8a"></div>
<div style="left:38px;top:85px;width:8px;height:19px;background:#f4f4f4;border-left:1px solid #555"></div>
<div class="t" style="left:414px;top:90px;font-size:11px;color:#333">@ 101 %</div>
<div style="left:466px;top:88px;width:13px;height:13px;border:1px solid #8a8a8a;background:#b0b0b0;border-radius:2px"></div>
<svg class="a" style="left:468px;top:90px" width="9" height="9"><path d="M1 1L8 8M8 1L1 8" stroke="#444" stroke-width="1.2"/></svg>
<div style="left:38px;top:105px;width:1826px;height:15px;background:#fff"></div>
<svg class="a" style="left:0;top:0" width="1920" height="125"><path d="M426.5 117V120 M432.5 117V120 M437.5 105V120 M443.5 117V120 M449.5 117V120 M455.5 117V120 M460.5 117V120 M466.5 115V120 M472.5 117V120 M478.5 117V120 M483.5 117V120 M489.5 117V120 M495.5 105V120 M501.5 117V120 M507.5 117V120 M512.5 117V120 M518.5 117V120 M524.5 115V120 M530.5 117V120 M535.5 117V120 M541.5 117V120 M547.5 117V120 M553.5 105V120 M558.5 117V120 M564.5 117V120 M570.5 117V120 M576.5 117V120 M581.5 115V120 M587.5 117V120 M593.5 117V120 M599.5 117V120 M604.5 117V120 M610.5 105V120 M616.5 117V120 M622.5 117V120 M627.5 117V120 M633.5 117V120 M639.5 115V120 M645.5 117V120 M651.5 117V120 M656.5 117V120 M662.5 117V120 M668.5 105V120 M674.5 117V120 M679.5 117V120 M685.5 117V120 M691.5 117V120 M697.5 115V120 M702.5 117V120 M708.5 117V120 M714.5 117V120 M720.5 117V120 M725.5 105V120 M731.5 117V120 M737.5 117V120 M743.5 117V120 M748.5 117V120 M754.5 115V120 M760.5 117V120 M766.5 117V120 M771.5 117V120 M777.5 117V120 M783.5 105V120 M789.5 117V120 M795.5 117V120 M800.5 117V120 M806.5 117V120 M812.5 115V120 M818.5 117V120 M823.5 117V120 M829.5 117V120 M835.5 117V120 M841.5 105V120 M846.5 117V120 M852.5 117V120 M858.5 117V120 M864.5 117V120 M869.5 115V120 M875.5 117V120 M881.5 117V120 M887.5 117V120 M892.5 117V120 M898.5 105V120 M904.5 117V120 M910.5 117V120 M915.5 117V120 M921.5 117V120 M927.5 115V120 M933.5 117V120 M939.5 117V120 M944.5 117V120 M950.5 117V120 M956.5 105V120 M962.5 117V120 M967.5 117V120 M973.5 117V120 M979.5 117V120 M985.5 115V120 M990.5 117V120 M996.5 117V120 M1002.5 117V120 M1008.5 117V120 M1013.5 105V120 M1019.5 117V120 M1025.5 117V120 M1031.5 117V120 M1036.5 117V120 M1042.5 115V120 M1048.5 117V120 M1054.5 117V120 M1059.5 117V120 M1065.5 117V120 M1071.5 105V120 M1077.5 117V120 M1083.5 117V120 M1088.5 117V120 M1094.5 117V120 M1100.5 115V120 M1106.5 117V120 M1111.5 117V120 M1117.5 117V120 M1123.5 117V120 M1129.5 105V120 M1134.5 117V120 M1140.5 117V120 M1146.5 117V120 M1152.5 117V120 M1157.5 115V120 M1163.5 117V120 M1169.5 117V120 M1175.5 117V120 M1180.5 117V120 M1186.5 105V120 M1192.5 117V120 M1198.5 117V120 M1203.5 117V120 M1209.5 117V120 M1215.5 115V120 M1221.5 117V120 M1227.5 117V120 M1232.5 117V120 M1238.5 117V120 M1244.5 105V120 M1250.5 117V120 M1255.5 117V120 M1261.5 117V120 M1267.5 117V120 M1273.5 115V120 M1278.5 117V120 M1284.5 117V120 M1290.5 117V120 M1296.5 117V120 M1301.5 105V120 M1307.5 117V120 M1313.5 117V120 M1319.5 117V120 M1324.5 117V120 M1330.5 115V120 M1336.5 117V120 M1342.5 117V120 M1347.5 117V120 M1353.5 117V120 M1359.5 105V120 M1365.5 117V120 M1371.5 117V120 M1376.5 117V120 M1382.5 117V120 M1388.5 115V120 M1394.5 117V120 M1399.5 117V120 M1405.5 117V120 M1411.5 117V120 M1417.5 105V120 M1422.5 117V120 M1428.5 117V120 M1434.5 117V120 M1440.5 117V120 M1445.5 115V120 M1451.5 117V120 M1457.5 117V120 M1463.5 117V120 M1468.5 117V120 M1474.5 105V120 M1480.5 117V120 M1486.5 117V120 M1491.5 117V120 M1497.5 117V120 M1503.5 115V120 M1509.5 117V120 M1515.5 117V120 M1520.5 117V120 M1526.5 117V120 M1532.5 105V120 M1538.5 117V120 M1543.5 117V120 M1549.5 117V120 M1555.5 117V120 M1561.5 115V120 M1566.5 117V120 M1572.5 117V120 M1578.5 117V120 M1584.5 117V120 M1589.5 105V120 M1595.5 117V120 M1601.5 117V120 M1607.5 117V120 M1612.5 117V120 M1618.5 115V120 M1624.5 117V120 M1630.5 117V120 M1635.5 117V120 M1641.5 117V120 M1647.5 105V120 M1653.5 117V120 M1659.5 117V120 M1664.5 117V120 M1670.5 117V120 M1676.5 115V120 M1682.5 117V120 M1687.5 117V120 M1693.5 117V120 M1699.5 117V120 M1705.5 105V120 M1710.5 117V120 M1716.5 117V120 M1722.5 117V120 M1728.5 117V120 M1733.5 115V120 M1739.5 117V120 M1745.5 117V120 M1751.5 117V120 M1756.5 117V120 M1762.5 105V120 M1768.5 117V120 M1774.5 117V120 M1779.5 117V120 M1785.5 117V120 M1791.5 115V120 M1797.5 117V120 M1803.5 117V120 M1808.5 117V120 M1814.5 117V120 M1820.5 105V120 M1826.5 117V120 M1831.5 117V120 M1837.5 117V120 M1843.5 117V120 M1849.5 115V120 M1854.5 117V120 M1860.5 117V120" stroke="#000" stroke-width="1"/><path d="M38 120.5H1864" stroke="#000"/><g font-family="Liberation Sans" font-size="9.2" fill="#000"><text x="439.0" y="114">10</text><text x="497.0" y="114">0</text><text x="555.0" y="114">10</text><text x="612.0" y="114">20</text><text x="670.0" y="114">30</text><text x="727.0" y="114">40</text><text x="785.0" y="114">50</text><text x="843.0" y="114">60</text><text x="900.0" y="114">70</text><text x="958.0" y="114">80</text><text x="1015.0" y="114">90</text><text x="1073.0" y="114">100</text><text x="1131.0" y="114">110</text><text x="1188.0" y="114">120</text><text x="1246.0" y="114">130</text><text x="1303.0" y="114">140</text><text x="1361.0" y="114">150</text><text x="1419.0" y="114">160</text><text x="1476.0" y="114">170</text><text x="1534.0" y="114">180</text><text x="1591.0" y="114">190</text><text x="1649.0" y="114">200</text><text x="1707.0" y="114">210</text><text x="1764.0" y="114">220</text><text x="1822.0" y="114">230</text></g></svg>
<div style="left:38px;top:105px;width:16px;height:15px;background:#fff;border-right:1px solid #000"></div>
<svg class="a" style="left:38px;top:105px" width="16" height="15"><path d="M5.5 0V15M0 5.5H16" stroke="#111" stroke-dasharray="1 1.5"/><path d="M5.5 3.5L7.5 5.5L5.5 7.5L3.5 5.5Z" fill="#fff" stroke="#111"/></svg>
<div style="left:38px;top:121px;width:15px;height:899px;background:#fff"></div>
<svg class="a" style="left:0;top:0" width="60" height="1040"><path d="M50 124.5H53 M50 130.5H53 M50 135.5H53 M50 141.5H53 M38 147.5H53 M50 153.5H53 M50 158.5H53 M50 164.5H53 M50 170.5H53 M48 176.5H53 M50 181.5H53 M50 187.5H53 M50 193.5H53 M50 199.5H53 M38 204.5H53 M50 210.5H53 M50 216.5H53 M50 222.5H53 M50 227.5H53 M48 233.5H53 M50 239.5H53 M50 245.5H53 M50 250.5H53 M50 256.5H53 M38 262.5H53 M50 268.5H53 M50 274.5H53 M50 279.5H53 M50 285.5H53 M48 291.5H53 M50 297.5H53 M50 302.5H53 M50 308.5H53 M50 314.5H53 M38 320.5H53 M50 325.5H53 M50 331.5H53 M50 337.5H53 M50 343.5H53 M48 348.5H53 M50 354.5H53 M50 360.5H53 M50 366.5H53 M50 371.5H53 M38 377.5H53 M50 383.5H53 M50 389.5H53 M50 394.5H53 M50 400.5H53 M48 406.5H53 M50 412.5H53 M50 418.5H53 M50 423.5H53 M50 429.5H53 M38 435.5H53 M50 441.5H53 M50 446.5H53 M50 452.5H53 M50 458.5H53 M48 464.5H53 M50 469.5H53 M50 475.5H53 M50 481.5H53 M50 487.5H53 M38 492.5H53 M50 498.5H53 M50 504.5H53 M50 510.5H53 M50 515.5H53 M48 521.5H53 M50 527.5H53 M50 533.5H53 M50 538.5H53 M50 544.5H53 M38 550.5H53 M50 556.5H53 M50 562.5H53 M50 567.5H53 M50 573.5H53 M48 579.5H53 M50 585.5H53 M50 590.5H53 M50 596.5H53 M50 602.5H53 M38 608.5H53 M50 613.5H53 M50 619.5H53 M50 625.5H53 M50 631.5H53 M48 636.5H53 M50 642.5H53 M50 648.5H53 M50 654.5H53 M50 659.5H53 M38 665.5H53 M50 671.5H53 M50 677.5H53 M50 682.5H53 M50 688.5H53 M48 694.5H53 M50 700.5H53 M50 706.5H53 M50 711.5H53 M50 717.5H53 M38 723.5H53 M50 729.5H53 M50 734.5H53 M50 740.5H53 M50 746.5H53 M48 752.5H53 M50 757.5H53 M50 763.5H53 M50 769.5H53 M50 775.5H53 M38 780.5H53 M50 786.5H53 M50 792.5H53 M50 798.5H53 M50 803.5H53 M48 809.5H53 M50 815.5H53 M50 821.5H53 M50 826.5H53 M50 832.5H53 M38 838.5H53 M50 844.5H53 M50 850.5H53 M50 855.5H53 M50 861.5H53 M48 867.5H53 M50 873.5H53 M50 878.5H53 M50 884.5H53 M50 890.5H53 M38 896.5H53 M50 901.5H53 M50 907.5H53 M50 913.5H53 M50 919.5H53 M48 924.5H53 M50 930.5H53 M50 936.5H53 M50 942.5H53 M50 947.5H53 M38 953.5H53 M50 959.5H53 M50 965.5H53 M50 970.5H53 M50 976.5H53 M48 982.5H53 M50 988.5H53 M50 994.5H53 M50 999.5H53 M50 1005.5H53 M38 1011.5H53 M50 1017.5H53" stroke="#000"/><path d="M53.5 105V1020" stroke="#000"/><g font-family="Liberation Sans" font-size="9" fill="#000"><text x="41" y="156.0">1</text><text x="41" y="164.2">0</text><text x="41" y="213.0">2</text><text x="41" y="221.2">0</text><text x="41" y="271.0">3</text><text x="41" y="279.2">0</text><text x="41" y="329.0">4</text><text x="41" y="337.2">0</text><text x="41" y="386.0">5</text><text x="41" y="394.2">0</text><text x="41" y="444.0">6</text><text x="41" y="452.2">0</text><text x="41" y="501.0">7</text><text x="41" y="509.2">0</text><text x="41" y="559.0">8</text><text x="41" y="567.2">0</text><text x="41" y="617.0">9</text><text x="41" y="625.2">0</text><text x="41" y="674.0">1</text><text x="41" y="682.2">0</text><text x="41" y="690.4">0</text><text x="41" y="732.0">1</text><text x="41" y="740.2">1</text><text x="41" y="748.4">0</text><text x="41" y="789.0">1</text><text x="41" y="797.2">2</text><text x="41" y="805.4">0</text><text x="41" y="847.0">1</text><text x="41" y="855.2">3</text><text x="41" y="863.4">0</text><text x="41" y="905.0">1</text><text x="41" y="913.2">4</text><text x="41" y="921.4">0</text><text x="41" y="962.0">1</text><text x="41" y="970.2">5</text><text x="41" y="978.4">0</text><text x="41" y="1020.0">1</text><text x="41" y="1028.2">6</text><text x="41" y="1036.4">0</text></g></svg>
<div style="left:54px;top:121px;width:1810px;height:899px;background:#bababa"></div>
<div style="left:495px;top:121px;width:1369px;height:822px;background:#59595b;border-left:1px solid #000;border-bottom:1px solid #000"></div>
<div style="left:524px;top:141px;width:547px;height:750px;background:#ca7c1f;border:4px solid #fff"></div>
<div style="left:1129px;top:141px;width:548px;height:750px;background:#ca7c1f;border:4px solid #fff"></div>
<div style="left:1729px;top:141px;width:135px;height:750px;background:#ca7c1f;border:4px solid #fff;border-right:none"></div>
<style>.tl{position:absolute;white-space:nowrap;transform:scaleX(0.950);transform-origin:0 0;font-size:18.5px;line-height:20px;height:20px;color:rgba(255,247,232,0.9);letter-spacing:0px}.tl.j{display:flex;justify-content:space-between}</style>
<div class="tl j" style="left:540px;top:439.5px;width:255.8px"><span>Caesed</span><span>et</span><span>expliae</span><span>derion</span><span>core</span></div><div class="tl j" style="left:540px;top:463.9px;width:255.8px"><span>et</span><span>landantia</span><span>doluptatiate</span><span>qua-</span></div><div class="tl j" style="left:540px;top:488.3px;width:255.8px"><span>tur,</span><span>siti</span><span>aut</span><span>magnatusdam,</span><span>sin-</span></div><div class="tl" style="left:540px;top:512.8px;width:255.8px;word-spacing:3px">cia cullupta nem etur?</div><div class="tl j" style="left:540px;top:537.2px;width:255.8px"><span>It</span><span>estorem</span><span>alis</span><span>aut</span><span>magnam</span></div><div class="tl j" style="left:540px;top:561.6px;width:255.8px"><span>audi</span><span>sam,</span><span>comnis</span><span>andae</span><span>of-</span></div><div class="tl j" style="left:540px;top:586.0px;width:255.8px"><span>ficideliti</span><span>tenimporro</span><span>quae</span><span>laut</span></div><div class="tl j" style="left:540px;top:610.4px;width:255.8px"><span>dus,</span><span>acerumet</span><span>esciuscil</span><span>im</span><span>ip-</span></div><div class="tl j" style="left:540px;top:634.9px;width:255.8px"><span>sundi</span><span>psundantiis</span><span>modipsum</span><span>re</span></div><div class="tl j" style="left:540px;top:659.3px;width:255.8px"><span>nistet</span><span>estrum</span><span>idicate</span><span>volendit</span></div><div class="tl j" style="left:540px;top:683.7px;width:255.8px"><span>pore</span><span>porio</span><span>beaquas</span><span>iuntur,</span><span>sitis</span></div><div class="tl j" style="left:540px;top:708.1px;width:255.8px"><span>dolupidio</span><span>con</span><span>ni</span><span>cus</span><span>ilitatur,</span><span>sit,</span></div><div class="tl j" style="left:540px;top:732.5px;width:255.8px"><span>idebis</span><span>sunt</span><span>quaepuda</span><span>volupta</span></div><div class="tl j" style="left:540px;top:757.0px;width:255.8px"><span>ecatus</span><span>ut</span><span>quibus</span><span>eratio</span><span>et</span><span>mo-</span></div><div class="tl j" style="left:540px;top:781.4px;width:255.8px"><span>luptius</span><span>magnam</span><span>excercium</span><span>qui</span></div><div class="tl j" style="left:540px;top:805.8px;width:255.8px"><span>re</span><span>dolut</span><span>omnis</span><span>as</span><span>audam</span><span>ulpa</span></div><div class="tl j" style="left:540px;top:830.2px;width:255.8px"><span>cus</span><span>modiciunt</span><span>magni</span><span>quidem</span></div><div class="tl j" style="left:540px;top:854.6px;width:255.8px"><span>nus</span><span>sim</span><span>volor</span><span>arciis</span><span>sequi</span><span>cum</span></div>
<div class="tl j" style="left:812px;top:439.5px;width:256.8px"><span>harum</span><span>debisi</span><span>doloria</span><span>necae</span><span>vo-</span></div><div class="tl j" style="left:812px;top:463.9px;width:256.8px"><span>lupit,</span><span>sectur,</span><span>corestrunt</span><span>es</span><span>sam</span></div><div class="tl j" style="left:812px;top:488.3px;width:256.8px"><span>que</span><span>volupta</span><span>non</span><span>nullam</span><span>utem</span></div><div class="tl j" style="left:812px;top:512.8px;width:256.8px"><span>es</span><span>esci</span><span>consed</span><span>mo</span><span>imusam</span></div><div class="tl j" style="left:812px;top:537.2px;width:256.8px"><span>estotat</span><span>essumque</span><span>ent</span><span>et</span><span>qui</span></div><div class="tl j" style="left:812px;top:561.6px;width:256.8px"><span>conseque</span><span>latia</span><span>dolorenihit</span><span>od</span></div><div class="tl j" style="left:812px;top:586.0px;width:256.8px"><span>ute</span><span>exerrumCus</span><span>il</span><span>il</span><span>eationse-</span></div><div class="tl j" style="left:812px;top:610.4px;width:256.8px"><span>quid</span><span>minverum</span><span>ressed</span><span>quas-</span></div><div class="tl j" style="left:812px;top:634.9px;width:256.8px"><span>periatem</span><span>rectibus</span><span>sequi</span><span>ab</span><span>ilia</span></div><div class="tl j" style="left:812px;top:659.3px;width:256.8px"><span>dolo</span><span>eum</span><span>quam</span><span>harum</span><span>quo</span></div><div class="tl j" style="left:812px;top:683.7px;width:256.8px"><span>ommossu</span><span>ntisita</span><span>dolupta</span><span>quia-</span></div><div class="tl j" style="left:812px;top:708.1px;width:256.8px"><span>tiberia</span><span>que</span><span>non</span><span>reius</span><span>exerio</span><span>et</span></div><div class="tl" style="left:812px;top:732.5px;width:256.8px;word-spacing:3px">alis molor atur?</div><div class="tl j" style="left:812px;top:757.0px;width:256.8px"><span>Ur</span><span>maiorrovide</span><span>pos</span><span>quam</span><span>et</span></div><div class="tl j" style="left:812px;top:781.4px;width:256.8px"><span>explaborest</span><span>alitatq</span><span>uiassunt</span></div><div class="tl j" style="left:812px;top:805.8px;width:256.8px"><span>et</span><span>qui</span><span>qui</span><span>sequis</span><span>volluptatum</span></div><div class="tl j" style="left:812px;top:830.2px;width:256.8px"><span>imus</span><span>ratemquo</span><span>et</span><span>labore</span><span>pa</span></div><div class="tl" style="left:812px;top:854.6px;width:256.8px;word-spacing:3px">voluptaero doloreiusam qui</div>
<div style="left:539px;top:421px;width:517px;height:450px;border:1px solid #b5c200"></div>
<div style="left:537px;top:419px;width:5px;height:5px;background:#f8f8c8;border:1px solid #b5c200"></div>
<div style="left:795px;top:419px;width:5px;height:5px;background:#f8f8c8;border:1px solid #b5c200"></div>
<div style="left:1053px;top:419px;width:5px;height:5px;background:#f8f8c8;border:1px solid #b5c200"></div>
<div style="left:537px;top:643px;width:5px;height:5px;background:#f8f8c8;border:1px solid #b5c200"></div>
<div style="left:1053px;top:643px;width:5px;height:5px;background:#f8f8c8;border:1px solid #b5c200"></div>
<div style="left:537px;top:868px;width:5px;height:5px;background:#f8f8c8;border:1px solid #b5c200"></div>
<div style="left:795px;top:868px;width:5px;height:5px;background:#f8f8c8;border:1px solid #b5c200"></div>
<div style="left:1053px;top:868px;width:5px;height:5px;background:#f8f8c8;border:1px solid #b5c200"></div>
<div style="left:949px;top:418px;width:7px;height:7px;background:#1a3c80;border:1px solid #0a1a40"></div>
<div style="left:536px;top:447px;width:9px;height:9px;background:#fff;border:1px solid #b5c200"></div>
<div style="left:1051px;top:466px;width:8px;height:8px;background:#f0f000;border:1px solid #b5c200"></div>
<div style="left:1051px;top:836px;width:9px;height:9px;background:#fff;border:1px solid #b5c200"></div>
<div style="left:1864px;top:105px;width:15px;height:915px;background:linear-gradient(90deg,#e0e0e0,#f4f4f4);border-left:1px solid #d0d0d0"></div>
<svg class="a" style="left:1867px;top:112px" width="9" height="5"><path d="M0 5L4.5 0L9 5Z" fill="#333"/></svg>
<svg class="a" style="left:1867px;top:1010px" width="9" height="5"><path d="M0 0L4.5 5L9 0Z" fill="#333"/></svg>
<div style="left:1865px;top:202px;width:14px;height:318px;background:linear-gradient(90deg,#f8f8f8,#e8e8e8 40%,#c4c4c4);border:1px solid #b0b0b0;border-radius:2px"></div>
<svg class="a" style="left:1868px;top:357px" width="8" height="11"><rect x="0" y="0" width="8" height="1" fill="#555"/><rect x="0" y="3" width="8" height="1" fill="#555"/><rect x="0" y="6" width="8" height="1" fill="#555"/></svg>
<div style="left:38px;top:1020px;width:1841px;height:16px;background:linear-gradient(#f6f6f6,#e6e6e6);border-top:1px solid #d8d8d8;border-bottom:1px solid #555"></div>
<div style="left:38px;top:1021px;width:30px;height:14px;background:linear-gradient(#eee,#ddd)"></div>
<svg class="a" style="left:41px;top:1023px" width="24" height="10"><path d="M1 1V9" stroke="#999"/><path d="M8 1L3 5L8 9Z M20 1L15 5L20 9Z" fill="#aaa"/></svg>
<div style="left:68px;top:1021px;width:97px;height:14px;background:#fff"></div>
<div class="t" style="left:70px;top:1023px;font-size:10px;color:#111">1</div>
<svg class="a" style="left:153px;top:1028px" width="8" height="5"><path d="M0 0H8L4.0 5Z" fill="#111"/></svg>
<svg class="a" style="left:170px;top:1023px" width="24" height="10"><path d="M2 1L7 5L2 9Z M13 1L18 5L13 9Z" fill="#222"/><path d="M20 1V9" stroke="#222" stroke-width="1.3"/></svg>
<svg class="a" style="left:200px;top:1021px" width="13" height="13"><defs><radialGradient id="gg" cx="0.4" cy="0.35"><stop offset="0" stop-color="#9f9"/><stop offset="1" stop-color="#1a9a1a"/></radialGradient></defs><circle cx="6.5" cy="6.5" r="6" fill="url(#gg)"/></svg>
<div class="t" style="left:215px;top:1023px;font-size:10px;color:#222;letter-spacing:-0.3px">Ohne Fehler</div>
<svg class="a" style="left:285px;top:1026px" width="6" height="4"><path d="M0 0H6L3.0 4Z" fill="#333"/></svg>
<svg class="a" style="left:302px;top:1021px" width="14" height="14"><circle cx="6" cy="7" r="5" fill="#ddd" stroke="#444" stroke-width="1.3"/><path d="M4 4H8L9 6V10H4Z" fill="#fff" stroke="#444" stroke-width="0.8"/><path d="M11 11H14L12.5 13Z" fill="#333"/></svg>
<div style="left:320px;top:1021px;width:1px;height:14px;background:#fff"></div>
<svg class="a" style="left:327px;top:1024px" width="5" height="8"><path d="M5 0L0 4L5 8Z" fill="#333"/></svg>
<div style="left:783px;top:1022px;width:249px;height:13px;background:linear-gradient(#fafafa,#d8d8d8);border:1px solid #9a9a9a;border-radius:2px"></div>
<svg class="a" style="left:903px;top:1024px" width="8" height="6"><path d="M1 0V6M4 0V6M7 0V6" stroke="#555"/></svg>
<svg class="a" style="left:1853px;top:1024px" width="5" height="8"><path d="M0 0L5 4L0 8Z" fill="#333"/></svg>
<div style="left:1879px;top:85px;width:37px;height:951px;background:#6e6e6e;border-left:1px solid #444"></div>
<div style="left:1880px;top:85px;width:35px;height:11px;background:linear-gradient(#5c5c5c,#3e3e3e)"></div>
<svg class="a" style="left:1902px;top:87px" width="11" height="7"><path d="M5 0L0 3.5L5 7Z M11 0L6 3.5L11 7Z" fill="#ddd"/></svg>
<div style="left:1880px;top:97px;width:35px;height:102px;background:#efefef;border-bottom:1px solid #8a8a8a;border-top:1px solid #fafafa"></div>
<svg class="a" style="left:1885px;top:101px" width="26" height="3"><g fill="#aaa"><rect x="0" y="0" width="1" height="1"/><rect x="0" y="2" width="1" height="1"/><rect x="2" y="0" width="1" height="1"/><rect x="2" y="2" width="1" height="1"/><rect x="4" y="0" width="1" height="1"/><rect x="4" y="2" width="1" height="1"/><rect x="6" y="0" width="1" height="1"/><rect x="6" y="2" width="1" height="1"/><rect x="8" y="0" width="1" height="1"/><rect x="8" y="2" width="1" height="1"/><rect x="10" y="0" width="1" height="1"/><rect x="10" y="2" width="1" height="1"/><rect x="12" y="0" width="1" height="1"/><rect x="12" y="2" width="1" height="1"/><rect x="14" y="0" width="1" height="1"/><rect x="14" y="2" width="1" height="1"/><rect x="16" y="0" width="1" height="1"/><rect x="16" y="2" width="1" height="1"/><rect x="18" y="0" width="1" height="1"/><rect x="18" y="2" width="1" height="1"/><rect x="20" y="0" width="1" height="1"/><rect x="20" y="2" width="1" height="1"/><rect x="22" y="0" width="1" height="1"/><rect x="22" y="2" width="1" height="1"/><rect x="24" y="0" width="1" height="1"/><rect x="24" y="2" width="1" height="1"/></g></svg>
<div style="left:1880px;top:199px;width:35px;height:105px;background:#efefef;border-bottom:1px solid #8a8a8a;border-top:1px solid #fafafa"></div>
<svg class="a" style="left:1885px;top:203px" width="26" height="3"><g fill="#aaa"><rect x="0" y="0" width="1" height="1"/><rect x="0" y="2" width="1" height="1"/><rect x="2" y="0" width="1" height="1"/><rect x="2" y="2" width="1" height="1"/><rect x="4" y="0" width="1" height="1"/><rect x="4" y="2" width="1" height="1"/><rect x="6" y="0" width="1" height="1"/><rect x="6" y="2" width="1" height="1"/><rect x="8" y="0" width="1" height="1"/><rect x="8" y="2" width="1" height="1"/><rect x="10" y="0" width="1" height="1"/><rect x="10" y="2" width="1" height="1"/><rect x="12" y="0" width="1" height="1"/><rect x="12" y="2" width="1" height="1"/><rect x="14" y="0" width="1" height="1"/><rect x="14" y="2" width="1" height="1"/><rect x="16" y="0" width="1" height="1"/><rect x="16" y="2" width="1" height="1"/><rect x="18" y="0" width="1" height="1"/><rect x="18" y="2" width="1" height="1"/><rect x="20" y="0" width="1" height="1"/><rect x="20" y="2" width="1" height="1"/><rect x="22" y="0" width="1" height="1"/><rect x="22" y="2" width="1" height="1"/><rect x="24" y="0" width="1" height="1"/><rect x="24" y="2" width="1" height="1"/></g></svg>
<div style="left:1880px;top:304px;width:35px;height:104px;background:#efefef;border-bottom:1px solid #8a8a8a;border-top:1px solid #fafafa"></div>
<svg class="a" style="left:1885px;top:308px" width="26" height="3"><g fill="#aaa"><rect x="0" y="0" width="1" height="1"/><rect x="0" y="2" width="1" height="1"/><rect x="2" y="0" width="1" height="1"/><rect x="2" y="2" width="1" height="1"/><rect x="4" y="0" width="1" height="1"/><rect x="4" y="2" width="1" height="1"/><rect x="6" y="0" width="1" height="1"/><rect x="6" y="2" width="1" height="1"/><rect x="8" y="0" width="1" height="1"/><rect x="8" y="2" width="1" height="1"/><rect x="10" y="0" width="1" height="1"/><rect x="10" y="2" width="1" height="1"/><rect x="12" y="0" width="1" height="1"/><rect x="12" y="2" width="1" height="1"/><rect x="14" y="0" width="1" height="1"/><rect x="14" y="2" width="1" height="1"/><rect x="16" y="0" width="1" height="1"/><rect x="16" y="2" width="1" height="1"/><rect x="18" y="0" width="1" height="1"/><rect x="18" y="2" width="1" height="1"/><rect x="20" y="0" width="1" height="1"/><rect x="20" y="2" width="1" height="1"/><rect x="22" y="0" width="1" height="1"/><rect x="22" y="2" width="1" height="1"/><rect x="24" y="0" width="1" height="1"/><rect x="24" y="2" width="1" height="1"/></g></svg>
<div style="left:1880px;top:408px;width:35px;height:135px;background:#efefef;border-bottom:1px solid #8a8a8a;border-top:1px solid #fafafa"></div>
<svg class="a" style="left:1885px;top:412px" width="26" height="3"><g fill="#aaa"><rect x="0" y="0" width="1" height="1"/><rect x="0" y="2" width="1" height="1"/><rect x="2" y="0" width="1" height="1"/><rect x="2" y="2" width="1" height="1"/><rect x="4" y="0" width="1" height="1"/><rect x="4" y="2" width="1" height="1"/><rect x="6" y="0" width="1" height="1"/><rect x="6" y="2" width="1" height="1"/><rect x="8" y="0" width="1" height="1"/><rect x="8" y="2" width="1" height="1"/><rect x="10" y="0" width="1" height="1"/><rect x="10" y="2" width="1" height="1"/><rect x="12" y="0" width="1" height="1"/><rect x="12" y="2" width="1" height="1"/><rect x="14" y="0" width="1" height="1"/><rect x="14" y="2" width="1" height="1"/><rect x="16" y="0" width="1" height="1"/><rect x="16" y="2" width="1" height="1"/><rect x="18" y="0" width="1" height="1"/><rect x="18" y="2" width="1" height="1"/><rect x="20" y="0" width="1" height="1"/><rect x="20" y="2" width="1" height="1"/><rect x="22" y="0" width="1" height="1"/><rect x="22" y="2" width="1" height="1"/><rect x="24" y="0" width="1" height="1"/><rect x="24" y="2" width="1" height="1"/></g></svg>
<div style="left:1880px;top:543px;width:35px;height:73px;background:#efefef;border-bottom:1px solid #8a8a8a;border-top:1px solid #fafafa"></div>
<svg class="a" style="left:1885px;top:547px" width="26" height="3"><g fill="#aaa"><rect x="0" y="0" width="1" height="1"/><rect x="0" y="2" width="1" height="1"/><rect x="2" y="0" width="1" height="1"/><rect x="2" y="2" width="1" height="1"/><rect x="4" y="0" width="1" height="1"/><rect x="4" y="2" width="1" height="1"/><rect x="6" y="0" width="1" height="1"/><rect x="6" y="2" width="1" height="1"/><rect x="8" y="0" width="1" height="1"/><rect x="8" y="2" width="1" height="1"/><rect x="10" y="0" width="1" height="1"/><rect x="10" y="2" width="1" height="1"/><rect x="12" y="0" width="1" height="1"/><rect x="12" y="2" width="1" height="1"/><rect x="14" y="0" width="1" height="1"/><rect x="14" y="2" width="1" height="1"/><rect x="16" y="0" width="1" height="1"/><rect x="16" y="2" width="1" height="1"/><rect x="18" y="0" width="1" height="1"/><rect x="18" y="2" width="1" height="1"/><rect x="20" y="0" width="1" height="1"/><rect x="20" y="2" width="1" height="1"/><rect x="22" y="0" width="1" height="1"/><rect x="22" y="2" width="1" height="1"/><rect x="24" y="0" width="1" height="1"/><rect x="24" y="2" width="1" height="1"/></g></svg>
<div style="left:1880px;top:616px;width:35px;height:45px;background:#efefef;border-bottom:1px solid #8a8a8a;border-top:1px solid #fafafa"></div>
<svg class="a" style="left:1885px;top:620px" width="26" height="3"><g fill="#aaa"><rect x="0" y="0" width="1" height="1"/><rect x="0" y="2" width="1" height="1"/><rect x="2" y="0" width="1" height="1"/><rect x="2" y="2" width="1" height="1"/><rect x="4" y="0" width="1" height="1"/><rect x="4" y="2" width="1" height="1"/><rect x="6" y="0" width="1" height="1"/><rect x="6" y="2" width="1" height="1"/><rect x="8" y="0" width="1" height="1"/><rect x="8" y="2" width="1" height="1"/><rect x="10" y="0" width="1" height="1"/><rect x="10" y="2" width="1" height="1"/><rect x="12" y="0" width="1" height="1"/><rect x="12" y="2" width="1" height="1"/><rect x="14" y="0" width="1" height="1"/><rect x="14" y="2" width="1" height="1"/><rect x="16" y="0" width="1" height="1"/><rect x="16" y="2" width="1" height="1"/><rect x="18" y="0" width="1" height="1"/><rect x="18" y="2" width="1" height="1"/><rect x="20" y="0" width="1" height="1"/><rect x="20" y="2" width="1" height="1"/><rect x="22" y="0" width="1" height="1"/><rect x="22" y="2" width="1" height="1"/><rect x="24" y="0" width="1" height="1"/><rect x="24" y="2" width="1" height="1"/></g></svg>
<div style="left:1880px;top:661px;width:35px;height:104px;background:#efefef;border-bottom:1px solid #8a8a8a;border-top:1px solid #fafafa"></div>
<svg class="a" style="left:1885px;top:665px" width="26" height="3"><g fill="#aaa"><rect x="0" y="0" width="1" height="1"/><rect x="0" y="2" width="1" height="1"/><rect x="2" y="0" width="1" height="1"/><rect x="2" y="2" width="1" height="1"/><rect x="4" y="0" width="1" height="1"/><rect x="4" y="2" width="1" height="1"/><rect x="6" y="0" width="1" height="1"/><rect x="6" y="2" width="1" height="1"/><rect x="8" y="0" width="1" height="1"/><rect x="8" y="2" width="1" height="1"/><rect x="10" y="0" width="1" height="1"/><rect x="10" y="2" width="1" height="1"/><rect x="12" y="0" width="1" height="1"/><rect x="12" y="2" width="1" height="1"/><rect x="14" y="0" width="1" height="1"/><rect x="14" y="2" width="1" height="1"/><rect x="16" y="0" width="1" height="1"/><rect x="16" y="2" width="1" height="1"/><rect x="18" y="0" width="1" height="1"/><rect x="18" y="2" width="1" height="1"/><rect x="20" y="0" width="1" height="1"/><rect x="20" y="2" width="1" height="1"/><rect x="22" y="0" width="1" height="1"/><rect x="22" y="2" width="1" height="1"/><rect x="24" y="0" width="1" height="1"/><rect x="24" y="2" width="1" height="1"/></g></svg>
<div style="left:1880px;top:765px;width:35px;height:42px;background:#efefef;border-bottom:1px solid #8a8a8a;border-top:1px solid #fafafa"></div>
<svg class="a" style="left:1885px;top:769px" width="26" height="3"><g fill="#aaa"><rect x="0" y="0" width="1" height="1"/><rect x="0" y="2" width="1" height="1"/><rect x="2" y="0" width="1" height="1"/><rect x="2" y="2" width="1" height="1"/><rect x="4" y="0" width="1" height="1"/><rect x="4" y="2" width="1" height="1"/><rect x="6" y="0" width="1" height="1"/><rect x="6" y="2" width="1" height="1"/><rect x="8" y="0" width="1" height="1"/><rect x="8" y="2" width="1" height="1"/><rect x="10" y="0" width="1" height="1"/><rect x="10" y="2" width="1" height="1"/><rect x="12" y="0" width="1" height="1"/><rect x="12" y="2" width="1" height="1"/><rect x="14" y="0" width="1" height="1"/><rect x="14" y="2" width="1" height="1"/><rect x="16" y="0" width="1" height="1"/><rect x="16" y="2" width="1" height="1"/><rect x="18" y="0" width="1" height="1"/><rect x="18" y="2" width="1" height="1"/><rect x="20" y="0" width="1" height="1"/><rect x="20" y="2" width="1" height="1"/><rect x="22" y="0" width="1" height="1"/><rect x="22" y="2" width="1" height="1"/><rect x="24" y="0" width="1" height="1"/><rect x="24" y="2" width="1" height="1"/></g></svg>
<svg class="a" style="left:1888px;top:112px" width="20" height="20"><path d="M10 10L19 14L10 18L1 14Z" fill="#333"/><path d="M10 6L19 10L10 14L1 10Z" fill="#999"/><path d="M10 2L19 6L10 10L1 6Z" fill="#fff" stroke="#555" stroke-width="0.8"/></svg>
<svg class="a" style="left:1888px;top:142px" width="20" height="20"><ellipse cx="6" cy="6" rx="4.5" ry="3.5" transform="rotate(40 6 6)" fill="none" stroke="#222" stroke-width="1.4"/><ellipse cx="10" cy="10" rx="3" ry="2.5" fill="none" stroke="#222" stroke-width="1.4"/><ellipse cx="14" cy="14" rx="4.5" ry="3.5" transform="rotate(-20 14 14)" fill="none" stroke="#222" stroke-width="1.4"/></svg>
<svg class="a" style="left:1888px;top:173px" width="20" height="20"><path d="M2.5 6.5L5 4H10V17H2.5Z M10 4H15L17.5 6.5V17H10Z" fill="#f4f4f4" stroke="#222"/><path d="M10 1V19" stroke="#222" stroke-width="1.2"/></svg>
<svg class="a" style="left:1888px;top:216px" width="20" height="20"><rect x="1.5" y="3.5" width="17" height="13" fill="#333"/><rect x="2.5" y="4.5" width="3" height="3" fill="#555"/><rect x="6.5" y="4.5" width="3" height="3" fill="#777"/><rect x="10.5" y="4.5" width="3" height="3" fill="#999"/><rect x="14.5" y="4.5" width="3" height="3" fill="#bbb"/><rect x="2.5" y="8.5" width="3" height="3" fill="#666"/><rect x="6.5" y="8.5" width="3" height="3" fill="#888"/><rect x="10.5" y="8.5" width="3" height="3" fill="#aaa"/><rect x="14.5" y="8.5" width="3" height="3" fill="#fff"/><rect x="2.5" y="12.5" width="3" height="3" fill="#777"/><rect x="6.5" y="12.5" width="3" height="3" fill="#ccc"/><rect x="10.5" y="12.5" width="3" height="3" fill="#fff"/><rect x="14.5" y="12.5" width="3" height="3" fill="#ddd"/></svg>
<svg class="a" style="left:1888px;top:246px" width="20" height="20"><path d="M3 14Q0 9 5 6Q10 3 16 5Q20 7 18 10Q17 12 14 11Q11 11 12 14Q12 17 8 17Q4 17 3 14Z" fill="#3a3a3a"/><circle cx="6" cy="9.5" r="1.5" fill="#fff"/><circle cx="10" cy="6.8" r="1.5" fill="#fff"/><circle cx="14.5" cy="7.5" r="1.3" fill="#fff"/><circle cx="7.5" cy="13.5" r="1.5" fill="#fff"/></svg>
<svg class="a" style="left:1888px;top:276px" width="20" height="20"><defs><linearGradient id="g3" x1="0" y1="0" x2="1" y2="1"><stop offset="0" stop-color="#fff"/><stop offset="1" stop-color="#333"/></linearGradient></defs><rect x="2.5" y="4.5" width="15" height="11" fill="url(#g3)" stroke="#222"/></svg>
<svg class="a" style="left:1888px;top:320px" width="20" height="20"><rect x="2" y="5" width="16" height="2.5" fill="#222"/><rect x="2" y="10" width="16" height="1.5" fill="#222"/><rect x="2" y="14" width="16" height="2.5" fill="#222"/></svg>
<div class="t" style="left:1888px;top:352px;font-family:'Liberation Serif',serif;font-style:italic;font-weight:bold;font-size:16px;color:#222">fx</div>
<svg class="a" style="left:1888px;top:381px" width="20" height="20"><rect x="7" y="3" width="11" height="11" fill="#fff" stroke="#222"/><rect x="3" y="9" width="8" height="8" fill="#eee" stroke="#222"/></svg>
<svg class="a" style="left:1888px;top:424px" width="20" height="20"><path d="M9 3H16V17M13 3V17" stroke="#333" stroke-width="2" fill="none"/><path d="M9 3Q4 3 4 7Q4 11 9 11Z" fill="#333"/></svg>
<div style="left:1883px;top:450px;width:29px;height:28px;border:1px solid #777;border-radius:3px;background:linear-gradient(#c9c9c9,#a8a8a8)"></div>
<svg class="a" style="left:1888px;top:454px" width="20" height="20"><path d="M12 3H17V16M15 3V16" stroke="#222" stroke-width="1.8" fill="none"/><path d="M12 3Q8 3 8 6Q8 9 12 9Z" fill="#222"/><rect x="2.5" y="11.5" width="5" height="5" fill="#fff" stroke="#222"/><rect x="5.5" y="8.5" width="5" height="5" fill="none" stroke="#222"/></svg>
<svg class="a" style="left:1888px;top:485px" width="20" height="20"><path d="M6 17L12 2L18 17M8.5 11H15.5" stroke="#222" stroke-width="2.2" fill="none"/><rect x="1.5" y="11.5" width="5" height="5" fill="#fff" stroke="#222"/><rect x="4.5" y="8.5" width="5" height="5" fill="none" stroke="#222"/></svg>
<div class="t" style="left:1886px;top:516px;font-family:'Liberation Serif',serif;font-style:italic;font-size:16px;color:#222">Aa</div>
<svg class="a" style="left:1888px;top:557px" width="20" height="20"><path d="M4 3V17" stroke="#222" stroke-width="1.5"/><rect x="6" y="4" width="8" height="5" fill="#777"/><rect x="6" y="11" width="12" height="5" fill="#222"/></svg>
<svg class="a" style="left:1888px;top:588px" width="20" height="20"><rect x="2" y="2" width="10" height="10" fill="#555"/><rect x="7.5" y="7.5" width="10" height="10" fill="#111" stroke="#eee"/></svg>
<svg class="a" style="left:1888px;top:632px" width="20" height="20"><path d="M1 8H7" stroke="#111" stroke-width="2.5"/><path d="M6 4.5L10 8L6 11.5Z" fill="#111"/><path d="M9 2H14L17 5V10" fill="#fff" stroke="#555"/><circle cx="14" cy="14.5" r="3.2" fill="#111"/><path d="M14 9.5V19.5M9 14.5H19M10.5 11L17.5 18M17.5 11L10.5 18" stroke="#111" stroke-width="1.3"/></svg>
<svg class="a" style="left:1888px;top:676px" width="20" height="20"><rect x="3.5" y="3.5" width="14" height="13" fill="#fff" stroke="#111"/><rect x="3.5" y="3.5" width="14" height="3.5" fill="#555" stroke="#111"/><path d="M3.5 10H17.5M3.5 13.5H17.5M7 7V16.5" stroke="#111" stroke-width="1.2"/></svg>
<svg class="a" style="left:1888px;top:706px" width="20" height="20"><rect x="5.5" y="2.5" width="12" height="11" fill="#fff" stroke="#111"/><rect x="5.5" y="2.5" width="12" height="3" fill="#444"/><path d="M8 8.5H16M8 11H16" stroke="#333" stroke-width="1.2"/><rect x="2.5" y="10.5" width="6" height="6" fill="#ddd" stroke="#111"/><rect x="5.5" y="13.5" width="5" height="5" fill="#999" stroke="#111"/></svg>
<svg class="a" style="left:1888px;top:736px" width="20" height="20"><rect x="5.5" y="2.5" width="12" height="11" fill="#fff" stroke="#111"/><path d="M5 2.5H18V5H5ZM15 5H18V14H15Z" fill="#111"/><rect x="2.5" y="10.5" width="6" height="6" fill="#ddd" stroke="#111"/><rect x="5.5" y="13.5" width="5" height="5" fill="#999" stroke="#111"/></svg>
<svg class="a" style="left:1888px;top:780px" width="20" height="20"><path d="M15 2L17 5Q10 6 9 8Q9 10 13 11Q17 13 13 17Q9 19 4 18L3 15Q9 15 10 13Q10 12 6 11Q2 9 5 5Q8 2 15 2Z" fill="#333" stroke="#111" stroke-width="0.6"/></svg>
<div style="left:1667px;top:416px;width:212px;height:263px;background:#efefef;border:1px solid #3a3a3a;box-shadow:1px 1px 2px rgba(0,0,0,.4)"></div>
<div style="left:1668px;top:417px;width:210px;height:4px;background:#4a4a4a"></div>
<div style="left:1668px;top:421px;width:210px;height:16px;background:linear-gradient(#aaa,#979797);border-bottom:1px solid #6a6a6a"></div>
<div class="t" style="left:1673px;top:424px;font-size:10px;color:#333;font-weight:bold">Al</div>
<div style="left:1689px;top:421px;width:85px;height:16px;background:linear-gradient(#f6f6f6,#eaeaea)"></div>
<svg class="a" style="left:1690px;top:424px" width="6" height="9"><path d="M0.5 3.5L3 1L5.5 3.5M0.5 5.5L3 8L5.5 5.5" stroke="#333" stroke-width="1.1" fill="none"/></svg>
<div class="t" style="left:1697px;top:424px;font-size:10px;color:#222;font-weight:bold">Absatzformate</div>
<div style="left:1780px;top:421px;width:1px;height:16px;background:#777"></div>
<div class="t" style="left:1784px;top:424px;font-size:10px;color:#333;font-weight:bold">Ze</div>
<div style="left:1797px;top:421px;width:1px;height:16px;background:#777"></div>
<div class="t" style="left:1802px;top:424px;font-size:10px;color:#333;font-weight:bold">Gl</div>
<div style="left:1815px;top:421px;width:1px;height:16px;background:#888"></div>
<svg class="a" style="left:1839px;top:425px" width="10" height="7"><path d="M0 0L4.5 3.5L0 7Z M5 0L9.5 3.5L5 7Z" fill="#333"/></svg>
<div style="left:1855px;top:424px;width:1px;height:10px;background:#666"></div>
<svg class="a" style="left:1860px;top:428px" width="5" height="3"><path d="M0 0H5L2.5 3Z" fill="#333"/></svg>
<svg class="a" style="left:1866px;top:425px" width="9" height="10"><rect x="0" y="0" width="9" height="1" fill="#333"/><rect x="0" y="2" width="9" height="1" fill="#333"/><rect x="0" y="4" width="9" height="1" fill="#333"/><rect x="0" y="6" width="9" height="1" fill="#333"/></svg>
<div class="t" style="left:1672px;top:443px;font-size:9.5px;color:#111;letter-spacing:-0.2px">Beschreibungstext</div>
<svg class="a" style="left:1864px;top:441px" width="9" height="14"><path d="M6 0L1 7H4L2 14L8 6H5Z" fill="#555"/></svg>
<div style="left:1670px;top:459px;width:207px;height:1px;background:#8a8a8a"></div>
<div style="left:1670px;top:460px;width:192px;height:20px;border-bottom:1px solid #fafafa;background:#eeeeee"></div>
<div class="t" style="left:1702px;top:465px;font-size:10px;color:#111;letter-spacing:-0.1px">[Einf. Abs.]</div>
<div style="left:1670px;top:480px;width:192px;height:20px;border-bottom:1px solid #fafafa;background:#eeeeee"></div>
<div class="t" style="left:1702px;top:485px;font-size:10px;color:#111;letter-spacing:-0.1px">Veranstaltung</div>
<div style="left:1670px;top:500px;width:192px;height:20px;border-bottom:1px solid #fafafa;background:#eeeeee"></div>
<div class="t" style="left:1702px;top:505px;font-size:10px;color:#111;letter-spacing:-0.1px">Datum</div>
<div style="left:1670px;top:520px;width:192px;height:20px;border-bottom:1px solid #fafafa;background:#eeeeee"></div>
<div class="t" style="left:1702px;top:525px;font-size:10px;color:#111;letter-spacing:-0.1px">Ort</div>
<div style="left:1670px;top:541px;width:189px;height:17px;background:#3d8ff2;border-left:2px solid #fff"></div>
<div class="t" style="left:1702px;top:545px;font-size:10px;color:#fff;font-weight:bold">Beschreibungstext</div>
<div style="left:1670px;top:560px;width:192px;height:20px;border-bottom:1px solid #fafafa;background:#eeeeee"></div>
<div class="t" style="left:1702px;top:565px;font-size:10px;color:#111;letter-spacing:-0.1px">Überschrift_Band</div>
<div style="left:1670px;top:580px;width:192px;height:20px;border-bottom:1px solid #fafafa;background:#eeeeee"></div>
<div class="t" style="left:1702px;top:585px;font-size:10px;color:#111;letter-spacing:-0.1px">Kontakt</div>
<div style="left:1670px;top:599px;width:192px;height:2px;background:#111"></div>
<div style="left:1862px;top:460px;width:15px;height:198px;background:#f0f0f0"></div>
<svg class="a" style="left:1866px;top:466px" width="8" height="5"><path d="M0 5L4 0L8 5Z" fill="#999"/></svg>
<svg class="a" style="left:1866px;top:650px" width="8" height="5"><path d="M0 0L4 5L8 0Z" fill="#999"/></svg>
<div style="left:1670px;top:658px;width:192px;height:1px;background:#999"></div>
<svg class="a" style="left:1750px;top:662px" width="12" height="10"><path d="M0.5 2.5H4L5 1H11.5V9.5H0.5Z" fill="#eee" stroke="#333"/></svg>
<div class="t" style="left:1779px;top:662px;font-size:10px;color:#aaa">&#182;+</div>
<svg class="a" style="left:1812px;top:662px" width="10" height="10"><rect x="0.5" y="0.5" width="9" height="9" fill="#fff" stroke="#222"/><rect x="3" y="4" width="4" height="4" fill="#333"/></svg>
<svg class="a" style="left:1842px;top:661px" width="10" height="11"><path d="M1 2H9M3 1H7M2 3L3 10H7L8 3Z" fill="#fff" stroke="#222"/><path d="M4 4V9M6 4V9" stroke="#222" stroke-width="0.7"/></svg>
<svg class="a" style="left:1867px;top:666px" width="12" height="12"><g fill="#888"><rect x="9" y="0" width="1" height="1"/><rect x="6" y="3" width="1" height="1"/><rect x="9" y="3" width="1" height="1"/><rect x="3" y="6" width="1" height="1"/><rect x="6" y="6" width="1" height="1"/><rect x="9" y="6" width="1" height="1"/><rect x="0" y="9" width="1" height="1"/><rect x="3" y="9" width="1" height="1"/><rect x="6" y="9" width="1" height="1"/><rect x="9" y="9" width="1" height="1"/></g></svg>
<svg class="a" style="left:1867px;top:1024px" width="12" height="12"><g fill="#888"><rect x="9" y="0" width="1" height="1"/><rect x="6" y="3" width="1" height="1"/><rect x="9" y="3" width="1" height="1"/><rect x="3" y="6" width="1" height="1"/><rect x="6" y="6" width="1" height="1"/><rect x="9" y="6" width="1" height="1"/><rect x="0" y="9" width="1" height="1"/><rect x="3" y="9" width="1" height="1"/><rect x="6" y="9" width="1" height="1"/><rect x="9" y="9" width="1" height="1"/></g></svg>
<div style="left:47px;top:30px;width:375px;height:663px;background:rgba(0,0,0,.25);filter:blur(1px)"></div>
<div style="left:45px;top:28px;width:375px;height:663px;background:#f0f0f0;border:1px solid #979797"></div>
<div style="left:74px;top:29px;width:1px;height:661px;background:#e2e3e3;border-right:1px solid #fff"></div>
<div class="t" style="left:80px;top:36px;font-size:12px;color:#111">Neu</div>
<svg class="a" style="left:404px;top:37px" width="4" height="8"><path d="M0 0L4 4L0 8Z" fill="#111"/></svg>
<div class="t" style="left:80px;top:58px;font-size:12px;color:#111">Öffnen...</div>
<div class="t" style="right:1521px;top:58px;font-size:12px;color:#111">Strg+O</div>
<div class="t" style="left:80px;top:80px;font-size:12px;color:#111">Bridge durchsuchen...</div>
<div class="t" style="right:1521px;top:80px;font-size:12px;color:#111">Alt+Strg+O</div>
<div class="t" style="left:80px;top:102px;font-size:12px;color:#111">Zuletzt verwendete Datei öffnen</div>
<svg class="a" style="left:404px;top:103px" width="4" height="8"><path d="M0 0L4 4L0 8Z" fill="#111"/></svg>
<div style="left:76px;top:123px;width:341px;height:2px;background:#dcdcdc;border-bottom:1px solid #fff"></div>
<div class="t" style="left:80px;top:132px;font-size:12px;color:#111">Meinen Bildschirm freigeben...</div>
<div class="t" style="left:80px;top:154px;font-size:12px;color:#111">Neuen Review erstellen ...</div>
<div style="left:76px;top:175px;width:341px;height:2px;background:#dcdcdc;border-bottom:1px solid #fff"></div>
<div class="t" style="left:80px;top:184px;font-size:12px;color:#111">Schließen</div>
<div class="t" style="right:1521px;top:184px;font-size:12px;color:#111">Strg+W</div>
<div class="t" style="left:80px;top:206px;font-size:12px;color:#111">Speichern</div>
<div class="t" style="right:1521px;top:206px;font-size:12px;color:#111">Strg+S</div>
<div class="t" style="left:80px;top:228px;font-size:12px;color:#111">Speichern unter...</div>
<div class="t" style="right:1521px;top:228px;font-size:12px;color:#111">Umschalt+Strg+S</div>
<div class="t" style="left:80px;top:250px;font-size:12px;color:#8d8d8d">Einchecken...</div>
<div class="t" style="left:80px;top:272px;font-size:12px;color:#111">Kopie speichern...</div>
<div class="t" style="right:1521px;top:272px;font-size:12px;color:#111">Alt+Strg+S</div>
<div class="t" style="left:80px;top:294px;font-size:12px;color:#111">Zurück zur letzten Version</div>
<div style="left:76px;top:315px;width:341px;height:2px;background:#dcdcdc;border-bottom:1px solid #fff"></div>
<div style="left:48px;top:319px;width:370px;height:21px;border:1px solid #aeccee;border-radius:3px;background:linear-gradient(#f2f6fb,#e3ecf7)"></div>
<div class="t" style="left:80px;top:324px;font-size:12px;color:#111">Platzieren...</div>
<div class="t" style="right:1521px;top:324px;font-size:12px;color:#111">Strg+D</div>
<div class="t" style="left:80px;top:346px;font-size:12px;color:#111">Aus Buzzword platzieren...</div>
<div class="t" style="left:80px;top:368px;font-size:12px;color:#111">XML importieren...</div>
<div style="left:76px;top:389px;width:341px;height:2px;background:#dcdcdc;border-bottom:1px solid #fff"></div>
<div class="t" style="left:80px;top:398px;font-size:12px;color:#111">Adobe PDF-Vorgaben</div>
<svg class="a" style="left:404px;top:399px" width="4" height="8"><path d="M0 0L4 4L0 8Z" fill="#111"/></svg>
<div class="t" style="left:80px;top:420px;font-size:12px;color:#111">Exportieren...</div>
<div class="t" style="right:1521px;top:420px;font-size:12px;color:#111">Strg+E</div>
<div class="t" style="left:80px;top:442px;font-size:12px;color:#111">Exportieren in</div>
<svg class="a" style="left:404px;top:443px" width="4" height="8"><path d="M0 0L4 4L0 8Z" fill="#111"/></svg>
<div style="left:76px;top:463px;width:341px;height:2px;background:#dcdcdc;border-bottom:1px solid #fff"></div>
<div class="t" style="left:80px;top:472px;font-size:12px;color:#111">Dokumentvorgaben</div>
<svg class="a" style="left:404px;top:473px" width="4" height="8"><path d="M0 0L4 4L0 8Z" fill="#111"/></svg>
<div class="t" style="left:80px;top:494px;font-size:12px;color:#111">Dokument einrichten...</div>
<div class="t" style="right:1521px;top:494px;font-size:12px;color:#111">Alt+Strg+P</div>
<div style="left:76px;top:515px;width:341px;height:2px;background:#dcdcdc;border-bottom:1px solid #fff"></div>
<div class="t" style="left:80px;top:524px;font-size:12px;color:#111">Benutzer...</div>
<div class="t" style="left:80px;top:546px;font-size:12px;color:#111">Dateiinformationen...</div>
<div class="t" style="right:1521px;top:546px;font-size:12px;color:#111">Alt+Umschalt+Strg+I</div>
<div style="left:76px;top:567px;width:341px;height:2px;background:#dcdcdc;border-bottom:1px solid #fff"></div>
<div class="t" style="left:80px;top:576px;font-size:12px;color:#111">Verpacken...</div>
<div class="t" style="right:1521px;top:576px;font-size:12px;color:#111">Alt+Umschalt+Strg+P</div>
<div class="t" style="left:80px;top:598px;font-size:12px;color:#111">Druckvorgaben</div>
<svg class="a" style="left:404px;top:599px" width="4" height="8"><path d="M0 0L4 4L0 8Z" fill="#111"/></svg>
<div class="t" style="left:80px;top:620px;font-size:12px;color:#111">Drucken...</div>
<div class="t" style="right:1521px;top:620px;font-size:12px;color:#111">Strg+P</div>
<div class="t" style="left:80px;top:642px;font-size:12px;color:#111">Broschüre drucken...</div>
<div style="left:76px;top:663px;width:341px;height:2px;background:#dcdcdc;border-bottom:1px solid #fff"></div>
<div class="t" style="left:80px;top:672px;font-size:12px;color:#111">Beenden</div>
<div class="t" style="right:1521px;top:672px;font-size:12px;color:#111">Strg+Q</div>
<div style="left:38px;top:4px;width:53px;height:31px;border:5px solid #f00;border-radius:3px"></div>
<div style="left:0px;top:107px;width:40px;height:33px;border:5px solid #f00;border-radius:3px"></div>
<div style="left:0px;top:198px;width:38px;height:33px;border:5px solid #f00;border-radius:3px"></div>
<div style="left:1684px;top:417px;width:95px;height:24px;border:5px solid #f00;border-radius:3px"></div>
<div style="left:1662px;top:536px;width:202px;height:26px;border:5px solid #f00;border-radius:3px"></div>
</body></html>
